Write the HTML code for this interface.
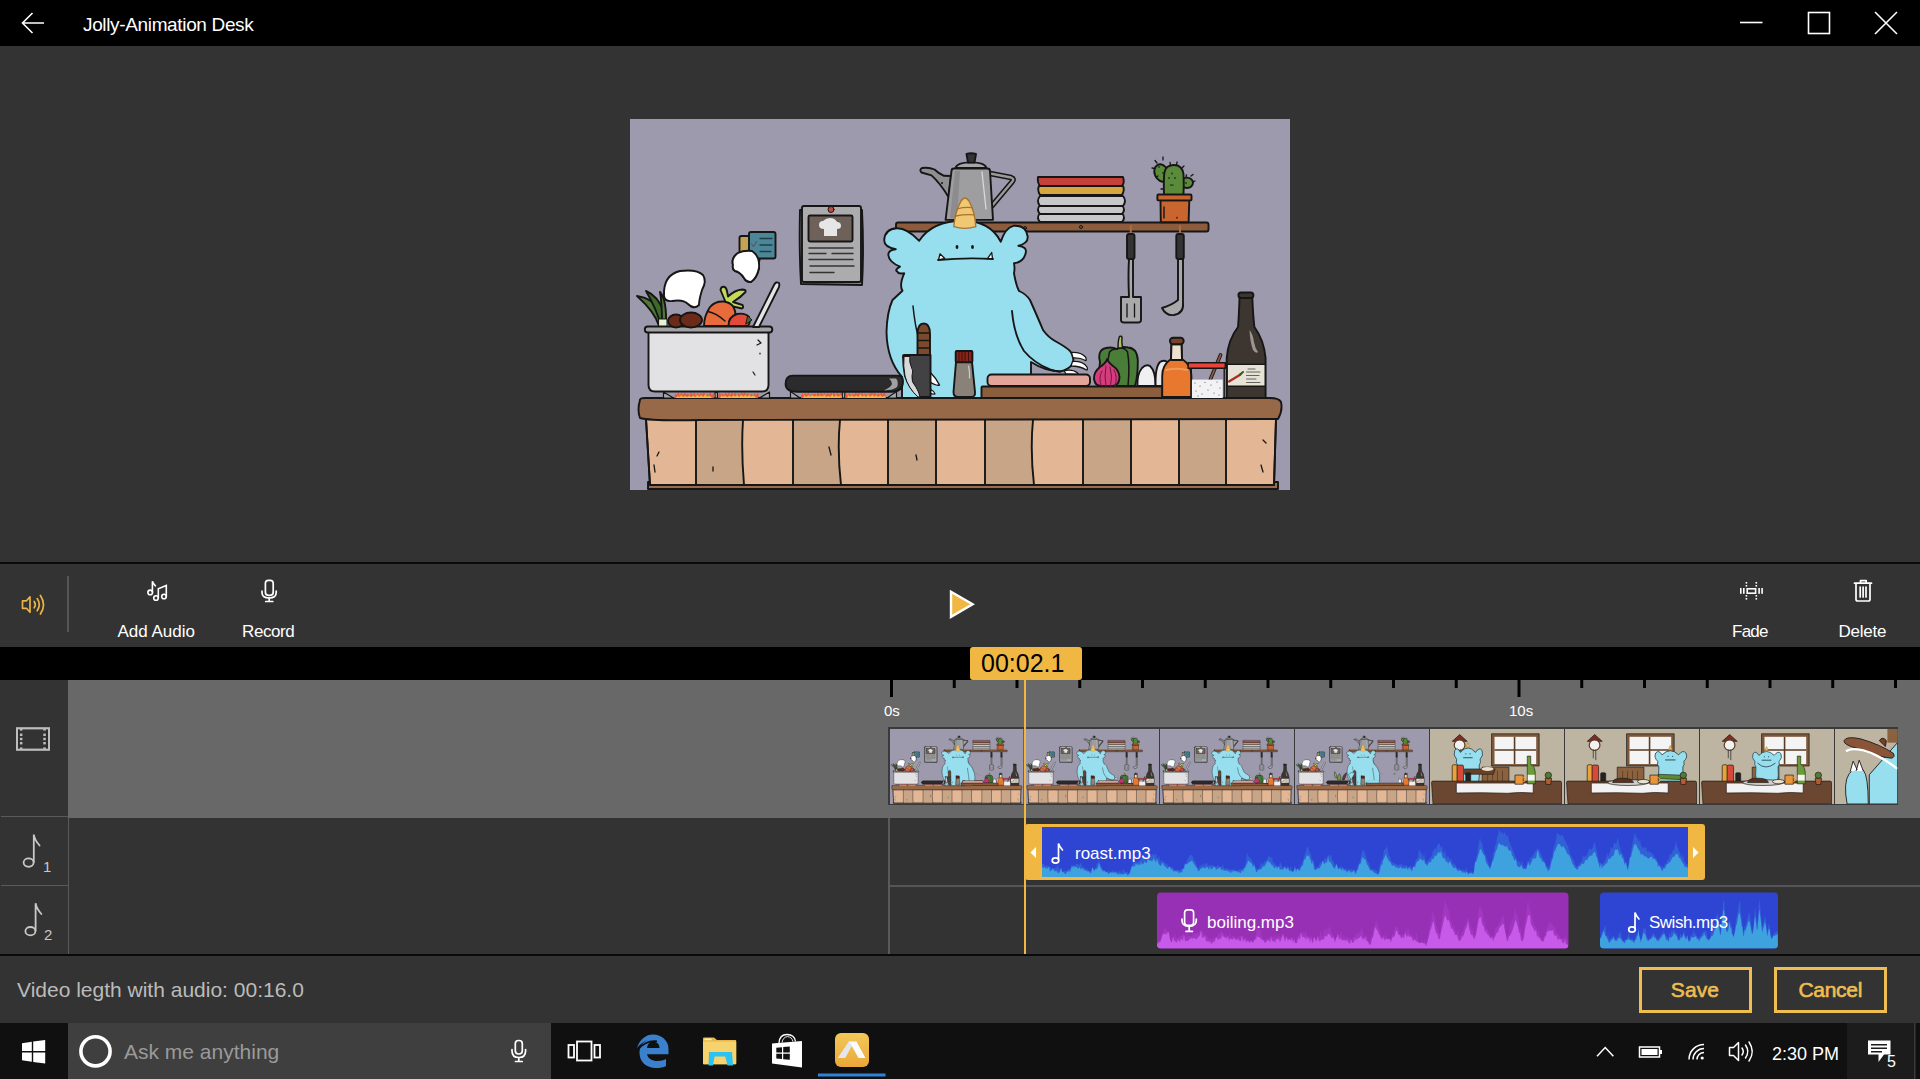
<!DOCTYPE html>
<html><head><meta charset="utf-8">
<style>
*{margin:0;padding:0;box-sizing:border-box}
html,body{width:1920px;height:1079px;overflow:hidden;background:#333;font-family:"Liberation Sans",sans-serif}
.a{position:absolute}
.t{position:absolute;white-space:nowrap;line-height:1}
svg{position:absolute;overflow:visible}
</style></head><body>
<svg width="0" height="0" style="position:absolute"><defs><symbol id="kitchen" viewBox="630 119 660 371" preserveAspectRatio="none">
 <rect x="630" y="119" width="660" height="371" fill="#9e9aad"/>
 <g stroke="#161616" stroke-width="1.9" stroke-linejoin="round" stroke-linecap="round">
 <!-- cabinet -->
 <rect x="648" y="482" width="630" height="7" fill="#9a6c4b"/>
 <path d="M646 419H1276L1274 485H650Z" fill="#e3b795"/>
 <g fill="#c9a587" stroke="none">
  <rect x="696" y="420" width="47" height="65"/><rect x="793" y="420" width="47" height="65"/><rect x="888" y="420" width="48" height="65"/><rect x="985" y="420" width="48" height="65"/><rect x="1083" y="420" width="48" height="65"/><rect x="1179" y="420" width="47" height="65"/>
 </g>
 <path d="M646 419H1276L1274 485H650Z" fill="none"/>
 <path fill="none" d="M696 420V485M743 420Q741 450 744 485M793 420V485M840 420Q837 450 841 485M888 420V485M936 420V485M985 420V485M1033 420Q1030 450 1034 485M1083 420V485M1131 420V485M1179 420V485M1226 420V485"/>
 <g fill="none" stroke-width="1.3">
  <path d="M654 465L655 472M657 456L659 452M713 467V471M829 447L831 455M1263 440L1266 443M1261 465L1263 472M916 455L917 460"/>
 </g>
 <!-- counter top -->
 <path d="M640 400Q637 410 640 418Q650 421 700 420L1278 419Q1283 410 1281 402Q1279 398 1270 398H645Q640 398 640 400Z" fill="#976949"/>
 <!-- pot stands & flames -->
 <path d="M663.5 392V398H673.5ZM769.5 392V398H759.5ZM715 392.5H717.5V398H715ZM790.5 391.5V398H800ZM896.5 391.5V398H887ZM842.3 391.5H844.8V398H842.3Z" fill="#a8a8aa" stroke-width="1.2"/>
 <path d="M674.0 398.0 L675.2 393.2 L676.6 394.7 L678.4 391.6 L679.8 395.6 L681.6 392.3 L683.0 395.3 L684.8 391.9 L686.2 394.8 L688.0 393.3 L689.4 396.0 L691.2 391.4 L692.6 395.4 L694.4 391.6 L695.8 396.0 L697.6 392.4 L699.0 394.9 L700.8 392.9 L702.2 394.6 L704.0 391.2 L705.4 396.0 L707.2 393.4 L708.6 395.2 L710.4 391.2 L711.8 395.4 L713.6 393.0 L715.0 395.4 L714.0 398.0Z" fill="#ec5a3a" stroke="none"/><path d="M676.0 398.0 L677.5 396.0 L679.0 397.0 L681.5 395.3 L683.0 396.9 L685.5 395.7 L687.0 397.0 L689.5 395.7 L691.0 396.9 L693.5 395.6 L695.0 397.2 L697.5 394.7 L699.0 396.8 L701.5 395.0 L703.0 397.1 L705.5 394.5 L707.0 396.6 L709.5 395.8 L711.0 397.0 L712.0 398.0Z" fill="#f6b640" stroke="none"/>
 <path d="M718.0 398.0 L719.2 391.1 L720.6 394.6 L722.4 393.4 L723.8 395.9 L725.6 391.4 L727.0 394.9 L728.8 391.8 L730.2 395.5 L732.0 392.0 L733.4 395.1 L735.2 392.0 L736.6 395.8 L738.4 392.4 L739.8 395.4 L741.6 391.7 L743.0 394.5 L744.8 391.1 L746.2 395.2 L748.0 392.4 L749.4 395.6 L751.2 393.4 L752.6 396.0 L754.4 392.3 L755.8 395.5 L757.6 392.5 L759.0 394.7 L758.0 398.0Z" fill="#ec5a3a" stroke="none"/><path d="M720.0 398.0 L721.5 395.2 L723.0 396.8 L725.5 395.6 L727.0 397.2 L729.5 395.5 L731.0 397.1 L733.5 395.2 L735.0 396.5 L737.5 395.0 L739.0 397.1 L741.5 394.7 L743.0 396.6 L745.5 394.9 L747.0 396.6 L749.5 394.9 L751.0 396.6 L753.5 395.5 L755.0 396.5 L756.0 398.0Z" fill="#f6b640" stroke="none"/>
 <path d="M801.0 398.0 L802.2 392.9 L803.6 395.2 L805.4 392.6 L806.8 395.1 L808.6 391.9 L810.0 395.9 L811.8 393.5 L813.2 394.7 L815.0 392.9 L816.4 395.6 L818.2 391.0 L819.6 395.3 L821.4 391.4 L822.8 395.3 L824.6 391.9 L826.0 395.8 L827.8 391.9 L829.2 394.7 L831.0 392.2 L832.4 394.9 L834.2 391.8 L835.6 395.9 L837.4 391.6 L838.8 395.1 L840.6 392.7 L842.0 396.0 L842.0 398.0Z" fill="#ec5a3a" stroke="none"/><path d="M803.0 398.0 L804.5 394.7 L806.0 396.9 L808.5 394.9 L810.0 396.6 L812.5 394.9 L814.0 396.6 L816.5 395.4 L818.0 396.6 L820.5 395.3 L822.0 396.5 L824.5 394.7 L826.0 397.1 L828.5 395.8 L830.0 397.0 L832.5 394.6 L834.0 396.9 L836.5 395.1 L838.0 397.0 L840.5 395.2 L842.0 396.9 L840.0 398.0Z" fill="#f6b640" stroke="none"/>
 <path d="M845.0 398.0 L846.2 392.9 L847.6 395.8 L849.4 392.5 L850.8 395.8 L852.6 393.3 L854.0 395.4 L855.8 391.2 L857.2 394.8 L859.0 391.6 L860.4 395.7 L862.2 392.2 L863.6 395.6 L865.4 393.1 L866.8 395.8 L868.6 393.0 L870.0 394.6 L871.8 391.4 L873.2 394.8 L875.0 391.5 L876.4 395.7 L878.2 392.7 L879.6 395.1 L881.4 391.7 L882.8 394.7 L884.6 391.3 L886.0 395.9 L886.0 398.0Z" fill="#ec5a3a" stroke="none"/><path d="M847.0 398.0 L848.5 395.1 L850.0 396.7 L852.5 395.2 L854.0 397.1 L856.5 395.3 L858.0 397.1 L860.5 394.6 L862.0 396.6 L864.5 395.2 L866.0 397.0 L868.5 394.6 L870.0 396.8 L872.5 394.7 L874.0 396.6 L876.5 395.2 L878.0 396.9 L880.5 395.1 L882.0 396.9 L884.5 395.8 L886.0 397.0 L884.0 398.0Z" fill="#f6b640" stroke="none"/>
 <!-- pot -->
 <path d="M648.5 332V385Q648.5 391.5 655 391.5H762Q768.5 391.5 768.5 385V332Z" fill="#e2e2e4"/>
 <rect x="644.8" y="326.5" width="127.5" height="6" rx="3" fill="#a3a3a5"/>
 <path d="M758 340L761 343L757 345M760 353V354M753 372L755 375" fill="none" stroke-width="1.2"/>
 <!-- greens / veg -->
 <path d="M637 296Q652 298 660 310L664 326L659 326Q655 312 637 296Z" fill="#4f7a36"/>
 <path d="M646 291Q658 296 664 312L666 326H661Q657 310 646 291Z" fill="#3d6a2b"/>
 <path d="M660 292Q667 300 666 326H662Q662 302 660 292Z" fill="#4f7a36"/>
 <path d="M659 319H667V326H659Z" fill="#e8f0d8" stroke-width="1"/>
 <ellipse cx="676" cy="321" rx="8" ry="6.5" fill="#6b2b18"/>
 <ellipse cx="691" cy="320" rx="11" ry="7.5" fill="#6b2b18"/>
 <path d="M720.5 290Q721 286.5 724 286.8Q726 287 727 291L728 296.5Q735 290 742 289.5Q746.5 289.5 745.5 292Q741 297 733 302Q739 304 742.5 305Q744 307.5 742 308.5L731 306L726 303L723 296Z" fill="#c3d957"/>
 <path d="M704 326Q704 316 710 307Q715 301 724 301.5Q734 303 735.3 312Q735.5 320 734 326Z" fill="#e86b3b"/>
 <path d="M708 311.5Q716 313 725 321" fill="none" stroke-width="1.4"/>
 <path d="M728.5 326Q728 317 737 314Q745 312.5 749 317Q751 322 748 326Z" fill="#e34a3c"/>
 <path d="M748 316L752 320L746 324Z" fill="#3e6a2b" stroke-width="1"/>
 <path d="M753 327L774 285Q776 281 779 283Q780 286 778 289L759 327Z" fill="#e4e4e6"/>
 <!-- steam blobs -->
 <path d="M664 296Q663 275 680 271Q697 269 703 275Q707 281 702 290Q699 300 699 305Q694 310 688 304Q683 299 672 301Q665 302 664 296Z" fill="#fff"/>
 <path d="M733 265Q731 258 738 253Q744 250 752 251Q760 256 759 268Q757 278 751 282Q746 282 744 278Q740 272 735 271Q732 269 733 265Z" fill="#fff"/>
 <!-- notes -->
 <rect x="739.5" y="236" width="20" height="26" rx="2" fill="#c4a256"/>
 <rect x="749" y="232" width="26.5" height="26.5" rx="2" fill="#4c8797"/>
 <path d="M760 238.5H772M760 245H772M760 251.5H771" fill="none" stroke="#1f3f48" stroke-width="1.3"/><path d="M751.5 244L753.5 246.5L756.5 241.5" fill="none" stroke="#6a4a6a" stroke-width="1.1"/>
 <path d="M733 265Q731 258 738 253Q744 250 752 251Q760 256 759 268Q757 278 751 282Q746 282 744 278Q740 272 735 271Q732 269 733 265Z" fill="#fff"/>
 <!-- recipe card -->
 <path d="M800 210Q799 250 801 284L862 285Q864 250 862 210Q830 207 800 210Z" fill="#8a8a8c"/>
 <rect x="802" y="206" width="59" height="76" rx="2" fill="#acacae"/>
 <rect x="808.5" y="215.5" width="44" height="26" rx="1.5" fill="#6e6159"/>
 <path d="M824 236V229Q819 229 819 225Q819 221 823 221Q826 218 830 218Q835 218 837 222Q841 222 841 226Q841 229 837 229V236Z" fill="#e6e6e6" stroke="none"/>
 <circle cx="831" cy="209.5" r="3" fill="#c54a3c" stroke-width="1"/>
 <path d="M809 248H853M809 253.5H826M832 253.5H853M809 259.5H853M810 266H854M810 272.5H834" fill="none" stroke="#333" stroke-width="1.4"/>
 <!-- shelf -->
 <rect x="896" y="222.5" width="312.5" height="9" rx="2" fill="#8c5c3c"/>
 <circle cx="1025" cy="228" r="1.5" fill="none" stroke-width="1"/><circle cx="1081" cy="227" r="1.5" fill="none" stroke-width="1"/>
 <!-- plates -->
 <path d="M1040 213Q1036 218 1040 222H1122Q1126 218 1122 213Z" fill="#c8c8ca"/>
 <path d="M1040 205Q1036 210 1040 214H1122Q1126 210 1122 205Z" fill="#c8c8ca"/>
 <path d="M1040 196Q1036 201 1040 206H1123Q1127 201 1123 196Z" fill="#c8c8ca"/>
 <path d="M1039 186Q1037 190 1040 195H1122Q1125 190 1123 186Z" fill="#d7a640"/>
 <path d="M1038 177Q1037 182 1040 186H1122Q1125 182 1123 177Z" fill="#c8403a"/>
 <!-- cactus -->
 <ellipse cx="1161.5" cy="173" rx="6.8" ry="9" transform="rotate(-25 1161.5 173)" fill="#5a8a3a"/>
 <ellipse cx="1187" cy="182.8" rx="6" ry="5.2" fill="#5a8a3a"/>
 <path d="M1164 195Q1163.5 178 1164.5 172Q1166 165 1174 165Q1182 165 1183.5 174Q1184 185 1183.5 195Z" fill="#5a8a3a"/>
 <g stroke-width="1.3"><path d="M1155 160.5L1157 163M1163 157L1163 160M1170 162.5L1170.5 165.5M1177 162L1176.5 165M1182 168L1184 166M1191 176L1193 174.5M1195 181L1193 182M1152 168L1155 168.5M1156 177L1158 176M1161 189L1163 189M1186 177L1186.5 175"/></g>
 <g fill="#1d3a12" stroke="none"><circle cx="1159" cy="167" r="0.9"/><circle cx="1163" cy="173" r="0.9"/><circle cx="1172" cy="173.5" r="0.9"/><circle cx="1175" cy="178" r="0.9"/><circle cx="1169" cy="178" r="0.9"/><rect x="1170" y="184.5" width="3.5" height="1.2"/><circle cx="1186" cy="183" r="0.9"/></g>
 <path d="M1160.5 200.4H1189.3L1188.6 222.3H1160.8Z" fill="#c9652f"/>
 <rect x="1157.4" y="194.5" width="34.1" height="5.9" rx="1" fill="#c9652f"/>
 <path d="M1164 207V218M1177 217.5V218" fill="none" stroke-width="1.4"/>
 <!-- utensils -->
 <path d="M1130.8 226V234M1180 226V234" fill="none" stroke="#b26a45" stroke-width="2"/>
 <rect x="1127" y="234" width="7.5" height="25" rx="2" fill="#333"/>
 <rect x="1176.3" y="234" width="7.5" height="25" rx="2" fill="#333"/>
 <path d="M1129 259Q1128 275 1129 297H1121V320Q1121 322.5 1124 322.5H1138Q1141 322.5 1141 320V297H1133Q1133 275 1133 259Z" fill="#a9a9ab"/>
 <path d="M1127 304V317M1134.5 304V317" fill="none" stroke-width="1.3"/>
 <path d="M1178 259V300Q1172 305 1162 308Q1166 316 1174 315Q1184 313 1183 303V259Z" fill="#a9a9ab"/>
 <!-- kettle -->
 <path d="M990 173.5L1011 177.5Q1015 179 1012 182L992 205.8" fill="none" stroke="#161616" stroke-width="5.5"/>
 <path d="M990 173.5L1011 177.5Q1015 179 1012 182L992 205.8" fill="none" stroke="#9a9a9c" stroke-width="2.4"/>
 <path d="M951 176L944 175.8Q938 173 934.5 169.5Q929 167 922 168Q919 170 921.5 172.5L931.5 175.4Q940 183 948.5 197Z" fill="#8f8f91"/>
 <circle cx="942" cy="183" r="1" fill="#161616" stroke="none"/>
 <path d="M951.5 171Q951.5 168.5 954 168.5H987.5Q990 168.5 990 171L993 219.9H945.6Z" fill="#9e9ea0"/>
 <path d="M955 171L950 218H957L960 171Z" fill="#8c8c8e" stroke="none"/>
 <path d="M982 172L986 209" fill="none" stroke="#d8d8d8" stroke-width="1.3"/>
 <path d="M955.6 168Q957 162.4 971 162.4Q985 162.4 986.4 168Z" fill="#a6a6a8"/>
 <path d="M966.5 154Q971 152.5 976 154L974.5 162.6H968Z" fill="#343434"/>
 <!-- monster body -->
 <path d="M902 398V377Q887 360 886.5 332Q887 312 892.5 300L902.5 290.8Q899 285 904.2 273.3Q898 274 897.5 271.7Q894 270 900 266.7Q889 262 888.3 255Q888 250 895.8 249.2Q884 247 884.2 240Q885 229 896.7 228.3Q907 228 919.2 240.8Q932 221 963.3 220.8Q990 221 1000.8 241.7Q1005 228 1013.3 225.8Q1026 225 1027.5 235.8Q1029 243 1018.3 245.8Q1027 247 1025.8 252.5Q1024 262 1014 263.3Q1015 268 1014 273.3Q1016 285 1019 291Q1026 294 1030 300Q1038 318 1043 330Q1048 337 1055 341Q1066 347 1070 351Q1075 357 1072.5 364Q1069 369.5 1060 371.5Q1045 371 1031 362L1031 375L1029 398Z" fill="#97dfee"/>
 <path d="M1012 311Q1014 335 1024 351Q1034 363 1050 369.5Q1056 371.5 1060 371.5" fill="none" stroke-width="1.9"/>
 <path d="M913 306Q915 325 918 336" fill="none" stroke-width="1.5"/>
 <path d="M1071.5 352.5Q1081 352 1085.5 357Q1087 360.5 1085.5 360.5Q1080 357.5 1073 358Z" fill="#fff" stroke-width="1.3"/>
 <path d="M1072.5 361.5Q1083 361 1087 367Q1088 370.5 1086.5 370Q1080 366 1071 366Z" fill="#fff" stroke-width="1.3"/>
 <path d="M1064 370.5Q1073 369 1077 372.5Q1079 374.5 1077.5 374.5L1066 374Z" fill="#fff" stroke-width="1.3"/>
 <!-- face -->
 <ellipse cx="957" cy="247" rx="1.4" ry="2.1" fill="#111" stroke="none"/>
 <ellipse cx="972.5" cy="247" rx="1.4" ry="2.1" fill="#111" stroke="none"/>
 <path d="M938 260Q965 257.5 993 259" fill="none" stroke-width="1.8"/>
 <path d="M938.5 260L940 253.8L944.6 258.3ZM992.5 258.6L991.7 252.5L987.5 258.6Z" fill="#fff" stroke-width="1.3"/>
 <path d="M953.8 226.7Q955 212 961 201Q965 195 969 201Q975 212 975.8 226.7Q965 230 953.8 226.7Z" fill="#f0c873" stroke="#a8732c" stroke-width="1.4"/>
 <path d="M957.2 208.8Q964 207 971.8 207.6M955.5 216Q965 214 974.2 214.8" fill="none" stroke="#a8732c" stroke-width="1.3"/>
 <!-- pan -->
 <path d="M785.6 384Q785.6 375.6 793 375.6H897Q903 375.6 903 381Q903 391.8 892 391.8H797Q785.6 391.8 785.6 384Z" fill="#2b2b2d"/>
 <path d="M889 378.5H896Q899 382 897 387Q894 390 884 390.5Q891 387 892 384Q892 381 889 378.5Z" fill="#a0a0a2" stroke="none"/>
 <!-- cleaver -->
 <path d="M930 372Q936 378 939.5 385Q936 386 930 382Z" fill="#fff" stroke-width="1.4"/>
 <path d="M930 389Q934 391 935 394Q932 394.5 930 393Z" fill="#fff" stroke-width="1.2"/>
 <path d="M917.5 355V334Q917.5 323.5 923.7 323.5Q930 323.5 930 334V355Z" fill="#7b4a2c"/>
 <path d="M918 333H929.5M918 340.5H929.5M918 348H929.5" fill="none" stroke-width="1.3"/>
 <path d="M903 356Q903 355 904 355H930.5V397H919Q909 388 905 376Q903 366 903 356Z" fill="#424244"/>
 <path d="M904 356.5H910Q909 362 911 366Q914 371 912 376Q911 382 916 387Q919 392 920 397H918Q908 388 905 376Q903 366 904 356.5Z" fill="#d8d8da" stroke-width="1"/>
 <!-- grinder -->
 <path d="M956 362L953.5 392Q953.5 397 958 397H971Q975.5 397 975 392L972 362Z" fill="#8a8279"/>
 <path d="M968.5 366Q970 372 969.5 378" fill="none" stroke="#d0ccc6" stroke-width="1.2"/>
 <rect x="955.7" y="351" width="16.7" height="11.3" rx="1" fill="#8a2418"/>
 <path d="M959 352V361M962 352V361M965 352V361M968.5 352V361" fill="none" stroke="#3a0e08" stroke-width="0.9"/>
 <!-- cutting board & meat -->
 <rect x="981.5" y="386.5" width="181" height="11.5" rx="1" fill="#8b5e3e"/>
 <rect x="987.5" y="374.5" width="102.5" height="11.5" rx="4" fill="#e3a59a"/>
 <!-- pepper, onion, eggs -->
 <path d="M1100 362Q1097 350 1106 348Q1112 346.5 1117 349Q1122 346 1128 347.5Q1137 348 1137.8 360Q1138 376 1135 386H1101Q1098 376 1100 362Z" fill="#4a7d38"/>
 <path d="M1109 386Q1106 365 1109.5 352Q1112 348.5 1117 349M1128 386Q1130 365 1127.5 352Q1125 348 1121 348" fill="none" stroke-width="1.5"/>
 <path d="M1118 348Q1118 340 1119.5 336.5Q1121.5 335.5 1122 337.5Q1121.5 342 1122.5 348Z" fill="#a8c060" stroke-width="1.4"/>
 <path d="M1107 359.2Q1106 363 1100 367Q1093.5 372 1094 379Q1095 386 1101 386H1113Q1119.5 385 1119.5 377Q1119 370 1113 366Q1108 362 1107 359.2Z" fill="#d63c7d"/>
 <path d="M1102 371Q1098 378 1101.5 386M1106 366Q1104 376 1106 386M1110 367Q1113 376 1110.5 386M1114 370Q1118 377 1115 386" fill="none" stroke="#6b1a3c" stroke-width="1"/>
 <path d="M1137.4 386Q1137 374 1142 368Q1146 364 1150 366Q1155.6 371 1155.6 386Z" fill="#f0f0f2"/>
 <path d="M1155.6 386Q1155 367 1160 362Q1165 359 1168.8 363V386Z" fill="#e9e9ec"/>
 <!-- orange bottle -->
 <path d="M1171.5 344.2H1181.5L1182 359Q1191.4 365 1191.4 376V397H1162.2V376Q1162.2 365 1171 359Z" fill="#e9782f"/>
 <path d="M1171.5 344.2H1181.5L1182 360H1171Z" fill="#ede2d0"/>
 <path d="M1166 370Q1176 367.5 1187 370" fill="none" stroke="#f4a060" stroke-width="2" stroke-opacity="0.8"/>
 <rect x="1169.9" y="337.7" width="13.8" height="6.5" rx="3.2" fill="#7a4225"/>
 <!-- jar -->
 <path d="M1220.6 354.8L1210.3 379.6" fill="none" stroke="#161616" stroke-width="3.6"/>
 <path d="M1220.6 354.8L1210.3 379.6" fill="none" stroke="#8b5a3c" stroke-width="1.8"/>
 <rect x="1191.2" y="379.6" width="31.5" height="18.4" fill="#f2f2f4" stroke="none"/>
 <g fill="#555" stroke="none"><circle cx="1195" cy="383" r="0.6"/><circle cx="1200" cy="386" r="0.6"/><circle cx="1205" cy="382.5" r="0.6"/><circle cx="1211" cy="385" r="0.6"/><circle cx="1217" cy="382" r="0.6"/><circle cx="1220" cy="388" r="0.6"/><circle cx="1196" cy="391" r="0.6"/><circle cx="1202" cy="394" r="0.6"/><circle cx="1208" cy="390" r="0.6"/><circle cx="1214" cy="393" r="0.6"/><circle cx="1219" cy="395" r="0.6"/><circle cx="1198" cy="396" r="0.6"/></g>
 <path d="M1191.2 368.3V398M1224.2 368.3V398" fill="none" stroke-width="1.4"/>
 <rect x="1188.1" y="362.8" width="37.2" height="5.5" fill="#e8453a" stroke-width="1.5"/>
 <!-- wine -->
 <path d="M1239.5 297.5Q1239 315 1238 327Q1228 340 1226.7 358V398H1265.6V358Q1264 340 1254.4 327Q1253 315 1252.3 297.5Z" fill="#3d3530"/>
 <rect x="1238.4" y="292.5" width="15" height="5.5" rx="2.7" fill="#3d3530"/>
 <path d="M1249.5 330Q1253 334 1254 342Q1255 348 1258 352Q1256 354 1253 350Q1250 342 1249.5 330Z" fill="#9a9490" stroke="none"/>
 <rect x="1227.2" y="364.4" width="38" height="21.8" fill="#e6e2d6" stroke-width="1.4"/>
 <path d="M1229 381.5L1240.5 374.5" fill="none" stroke="#b02a24" stroke-width="2.2"/>
 <path d="M1240 374.5L1243 372" fill="none" stroke="#2e5a22" stroke-width="2"/>
 <path d="M1248 369H1255M1246.5 372H1260M1246.5 375.5H1259M1246.5 379H1256M1246.5 382.5H1260" fill="none" stroke="#555" stroke-width="0.9"/>
 </g>
</symbol>
<symbol id="kitchen1" viewBox="630 119 660 371" preserveAspectRatio="none">
 <use href="#kitchen" x="630" y="119" width="660" height="371"/>
 <path d="M1019 291L1031 300L1043 330L1072 350L1092 360L1092 373.5L1031 373.5L1031 362Z" fill="#9e9aad"/>
 <rect x="987.5" y="374.5" width="102.5" height="11.5" rx="4" fill="#e3a59a" stroke="#161616" stroke-width="1.9"/>
 <path d="M1014 273.3Q1016 285 1019 291Q1040 310 1047 340Q1052 362 1046 380Q1042 392 1036 398H1000V273Z" fill="#97dfee" stroke="none"/>
 <path d="M1014 273.3Q1016 285 1019 291Q1040 310 1047 340Q1052 362 1046 380Q1042 392 1036 398" fill="none" stroke="#161616" stroke-width="1.9"/>
 <path d="M1012 311Q1018 350 1022 386" fill="none" stroke="#161616" stroke-width="1.9"/>
 <rect x="981.5" y="386.5" width="181" height="11.5" rx="1" fill="#8b5e3e" stroke="#161616" stroke-width="1.9"/>
 <rect x="987.5" y="374.5" width="102.5" height="11.5" rx="4" fill="#e3a59a" stroke="#161616" stroke-width="1.9"/>
</symbol>
<symbol id="kitchen4" viewBox="630 119 660 371" preserveAspectRatio="none">
 <use href="#kitchen1" x="630" y="119" width="660" height="371"/>
 <g stroke="#161616" stroke-width="1.9" stroke-linejoin="round">
  <path d="M1046 344H1140V386H1046Z" fill="#9e9aad" stroke="none"/>
  <path d="M985 372H1046V386H985Z" fill="#97dfee" stroke="none"/>
  <path d="M1046 344Q1049 362 1046 380Q1044 384 1042 386" fill="none"/>
  <rect x="981.5" y="386.5" width="181" height="11.5" rx="1" fill="#8b5e3e"/>
  <path d="M893 345Q905 328 925 336L906 372Z" fill="#97dfee"/>
  <path d="M840 372Q835 350 850 340Q858 355 856 372Z" fill="#6f9a45"/>
  <path d="M862 370Q868 340 885 335Q880 358 872 372Z" fill="#5a3a3a"/>
  <path d="M828 360Q820 345 826 330Q838 345 836 362Z" fill="#8aaa50"/>
 </g>
</symbol>
<g id="room">
 <rect width="135" height="77" fill="#bdb4a2"/>
 <g stroke="#1f1a16" stroke-width="0.7" stroke-linejoin="round">
 <rect x="62" y="4.9" width="48" height="33.1" fill="#7b573b"/>
 <rect x="65" y="8" width="42" height="28" fill="#f4f4f4" stroke="none"/>
 <path d="M85.2 8V36M65 21.6H107" stroke="#5a3b25" stroke-width="1.6"/>
 <path d="M22.4 12.7L29.9 5.7L37.5 12.7Z" fill="#7b2e22"/>
 <circle cx="29.8" cy="16.6" r="5.4" fill="#f2f2f2" stroke="#5a3b25" stroke-width="1.2"/>
 <path d="M28.5 21V30M31 21V32" stroke="#333" stroke-width="0.8"/>
 <path d="M52.6 54V39.2H79.5V54Z" fill="#8a623f"/>
 <path d="M58 43V54M63 43V54M68 43V54M73 43V54" stroke="#5a3b25" stroke-width="0.8"/>
 </g>
</g>
<g id="table">
 <g stroke="#1f1a16" stroke-width="0.7" stroke-linejoin="round">
 <rect x="22.4" y="36.7" width="5.2" height="20" rx="1.5" fill="#e9a33a"/>
 <rect x="27.3" y="37" width="6.5" height="20" rx="1.5" fill="#d84a38"/>
 <rect x="36" y="45" width="5" height="12" rx="1" fill="#222"/>
 <path d="M1.6 55Q1.6 53.5 3 53.5H131Q132.5 53.5 132.5 55V77H3Z" fill="#6b4631"/>
 <path d="M26.5 55.5H104V65.7Q90 64.5 78 66Q55 65 26.5 65.7Z" fill="#f3f1f2"/>
 <path d="M85.6 47.3H94V56.7H85.6Z" fill="#e9963a"/>
 <path d="M94 49.5Q97.5 52 94 54.5" fill="none" stroke="#e9963a" stroke-width="1.2"/>
 <path d="M116 50.5H122.5L121.5 57H117Z" fill="#b85c30"/>
 <circle cx="119.2" cy="47.5" r="3.2" fill="#4e7d36"/>
 </g>
</g>
<g id="plate" stroke="#1f1a16" stroke-width="0.7"> <ellipse cx="63.5" cy="55" rx="20.5" ry="3" fill="#cfcfcf"/>
 <path d="M48 55Q48 50.5 58 50.5Q68 50.5 69 55Z" fill="#5c2f1c"/>
 <ellipse cx="79" cy="54" rx="6" ry="2.2" fill="#e8e2d0"/>
</g>
<g id="mini">
 <path d="M8 9Q16 0 24 9Q28 3 31 7Q33 12 29 16Q30 20 28 22Q29 32 27 42H6Q4 32 5 22Q3 20 4 16Q0 12 2 7Q5 3 8 9Z" fill="#97dfee" stroke="#1f3a44" stroke-width="0.8"/>
 <path d="M14 3.5L16 -1L18 3.5Z" fill="#f0c060" stroke="#a8732c" stroke-width="0.5"/>
 <path d="M11 14.5H21" stroke="#1f3a44" stroke-width="0.9"/>
 <circle cx="13.8" cy="10.5" r="0.6" fill="#1f3a44"/><circle cx="18.2" cy="10.5" r="0.6" fill="#1f3a44"/>
</g>
<symbol id="dining5" viewBox="0 0 135 77" preserveAspectRatio="none">
 <use href="#room"/>
 <use href="#mini" transform="translate(23 15) scale(0.95 1)"/>
 <path d="M34.7 41H65.6L64 46.5H34.7Z" fill="#6b3f26" stroke="#1f1a16" stroke-width="0.6"/>
 <ellipse cx="58" cy="41" rx="6" ry="2" fill="#e8e2d0"/>
 <use href="#table"/>
 <path d="M98 27.8H101.5V36Q106 39 106 44V56.3H98V44Q98 39 98 36Z" fill="#6a9a3a" stroke="#1f1a16" stroke-width="0.6"/>
 <rect x="98.5" y="47" width="7" height="6" fill="#f4f4f4"/>
</symbol>
<symbol id="dining6" viewBox="0 0 135 77" preserveAspectRatio="none">
 <use href="#room"/>
 <use href="#mini" transform="translate(89.3 18) scale(1.05 0.95)"/>
 <path d="M94 46.5L120 47.5L119 52L95 51Z" fill="#5d8a30" stroke="#1f1a16" stroke-width="0.6"/>
 <use href="#table"/>
 <use href="#plate"/>
</symbol>
<symbol id="dining7" viewBox="0 0 135 77" preserveAspectRatio="none">
 <use href="#room"/>
 <use href="#mini" transform="translate(51.5 19) scale(0.97 0.9)"/>
 <path d="M58 35Q66 43 76 35" fill="none" stroke="#1f3a44" stroke-width="0.8"/>
 <use href="#table"/>
 <use href="#plate"/>
 <path d="M98 27.8H101.5V36Q106 39 106 44V56.3H98V44Q98 39 98 36Z" fill="#6a9a3a" stroke="#1f1a16" stroke-width="0.6"/>
 <rect x="98.5" y="47" width="7" height="6" fill="#f4f4f4"/>
</symbol>
<symbol id="closeup" viewBox="0 0 62 77" preserveAspectRatio="none">
 <rect width="62" height="77" fill="#bdb4a2"/>
 <rect x="52" y="0" width="10" height="14" fill="#8a623f"/>
 <g stroke="#1a1a1a" stroke-width="0.9" stroke-linejoin="round">
 <path d="M34 47L62 14V77H34Z" fill="#97dfee"/>
 <path d="M12 77Q8 55 14 46Q20 38 28 42Q33 48 33 77Z" fill="#97dfee"/>
 <path d="M15 44L18 33L22 42M21 43L24 32L28 43" fill="#fff"/>
 <path d="M9 12Q11 7 25 10Q45 16 58 25Q60 29 56 30Q40 28 22 20Q8 16 9 12Z" fill="#8a5438"/>
 <path d="M44 12Q47 7 51 12L50 18Z" fill="#7a3e22"/>
 </g>
 <path d="M11 23Q15 19 28 22Q45 27 62 41" fill="none" stroke="#fff" stroke-width="2.4"/>
</symbol>
</defs></svg>
<!-- title bar -->
<div class="a" style="left:0;top:0;width:1920px;height:46px;background:#000"></div>
<svg style="left:0;top:0" width="1920" height="46">
 <g stroke="#fff" stroke-width="1.6" fill="none">
  <path d="M22.5 23H44M32.5 13L22.5 23L32.5 33"/>
  <path d="M1740 22.5H1762.5"/>
  <rect x="1808.5" y="12.5" width="21" height="21"/>
  <path d="M1875 12L1897 34M1897 12L1875 34"/>
 </g>
</svg>
<div class="t" style="left:83px;top:15px;font-size:19px;letter-spacing:-0.35px;color:#fff">Jolly-Animation Desk</div>

<!-- preview area -->
<div class="a" style="left:0;top:46px;width:1920px;height:516px;background:#333"></div>
<svg style="left:630px;top:119px" width="660" height="371"><use href="#kitchen" width="660" height="371"/></svg>

<!-- separator -->
<div class="a" style="left:0;top:562px;width:1920px;height:2px;background:#0a0a0a"></div>
<!-- toolbar -->
<div class="a" style="left:0;top:564px;width:1920px;height:83px;background:#333"></div>
<div class="a" style="left:67px;top:576px;width:2px;height:56px;background:#555"></div>


<!-- toolbar icons -->
<svg style="left:0;top:560px" width="1920" height="90" viewBox="0 560 1920 90">
 <g fill="none" stroke="#e9b443" stroke-width="1.7" stroke-linejoin="round" stroke-linecap="round">
  <path d="M22.5 600.8H26.5L30 596.8V612.2L26.5 608.3H22.5Z"/>
  <path d="M34.2 601.5Q36.3 604.6 34.2 607.8"/>
  <path d="M37.2 598.6Q41.3 604.6 37.2 610.8"/>
  <path d="M40.4 595.4Q46.6 604.6 40.4 614"/>
 </g>
 <g fill="none" stroke="#fff" stroke-width="1.6" stroke-linecap="round">
  <path d="M152.4 592V581.3Q153.2 584 155.4 585.8"/>
  <circle cx="150.2" cy="592.4" r="2.3"/>
  <path d="M158.3 598V588.7L166.3 585.5V596.5"/>
  <circle cx="156" cy="598" r="2.3"/>
  <circle cx="164" cy="596.5" r="2.3"/>
 </g>
 <g fill="none" stroke="#fff" stroke-width="1.7" stroke-linecap="round">
  <rect x="265.4" y="580.3" width="7.8" height="15" rx="3"/>
  <path d="M262 591.2V592.5Q262 598 269.2 598Q276.2 598 276.2 592.5V591.2"/>
  <path d="M269.2 598V601.5M265.7 601.5H272.8"/>
 </g>
 <path d="M951 591.8L972.6 604.3L951 616.8Z" fill="#f0b843" stroke="#fff" stroke-width="2.4" stroke-linejoin="miter"/>
 <g fill="#fff">
  <rect x="1740" y="588" width="1.6" height="5.8"/>
  <rect x="1743" y="588" width="1.6" height="5.8"/>
  <rect x="1758.3" y="588" width="1.6" height="5.8"/>
  <rect x="1761.3" y="588" width="1.6" height="5.8"/>
  <rect x="1745.6" y="582" width="1.6" height="1.6"/><rect x="1745.6" y="585" width="1.6" height="1.6"/>
  <rect x="1745.6" y="595" width="1.6" height="1.6"/><rect x="1745.6" y="598" width="1.6" height="1.6"/>
  <rect x="1755.5" y="582" width="1.6" height="1.6"/><rect x="1755.5" y="585" width="1.6" height="1.6"/>
  <rect x="1755.5" y="595" width="1.6" height="1.6"/><rect x="1755.5" y="598" width="1.6" height="1.6"/>
 </g>
 <rect x="1747.2" y="588.8" width="8.4" height="4.4" fill="none" stroke="#fff" stroke-width="1.6"/>
 <g fill="none" stroke="#fff" stroke-width="1.7" stroke-linecap="round" stroke-linejoin="round">
  <path d="M1854.5 583.2H1871.5"/>
  <path d="M1860.5 583V580.6H1866.2V583"/>
  <path d="M1856 583.5V599.2Q1856 601 1857.8 601H1868.2Q1870 601 1870 599.2V583.5"/>
  <path d="M1860.2 587V597M1863.1 587V597M1866 587V597"/>
 </g>
</svg>
<div class="t" style="left:117.5px;top:623px;font-size:17px;color:#fff">Add Audio</div>
<div class="t" style="left:242px;top:623px;font-size:17px;letter-spacing:-0.4px;color:#fff">Record</div>
<div class="t" style="left:1732px;top:623px;font-size:17px;letter-spacing:-0.75px;color:#fff">Fade</div>
<div class="t" style="left:1838.5px;top:623px;font-size:17px;letter-spacing:-0.22px;color:#fff">Delete</div>

<!-- black ruler bar -->
<div class="a" style="left:0;top:647px;width:1920px;height:33px;background:#000"></div>

<!-- timeline -->
<div class="a" style="left:0;top:680px;width:68px;height:274px;background:#333"></div>
<div class="a" style="left:68px;top:680px;width:1852px;height:138px;background:#686868"></div>
<div class="a" style="left:68px;top:818px;width:1852px;height:136px;background:#333"></div>
<div class="a" style="left:0;top:954px;width:1920px;height:2px;background:#0a0a0a"></div>


<!-- thumbnails -->
<div class="a" style="left:888px;top:727px;width:1010px;height:78px;background:#3a3a3a"></div>
<svg style="left:889.75px;top:728.5px" width="133.75" height="75"><use href="#kitchen1" width="133.75" height="75"/></svg>
<svg style="left:1024.5px;top:728.5px" width="134.00" height="75"><use href="#kitchen" width="134.00" height="75"/></svg>
<svg style="left:1159.5px;top:728.5px" width="134.00" height="75"><use href="#kitchen" width="134.00" height="75"/></svg>
<svg style="left:1294.5px;top:728.5px" width="134.00" height="75"><use href="#kitchen4" width="134.00" height="75"/></svg>
<svg style="left:1429.5px;top:728.5px" width="134.00" height="75"><use href="#dining5" width="134.00" height="75"/></svg>
<svg style="left:1564.5px;top:728.5px" width="134.00" height="75"><use href="#dining6" width="134.00" height="75"/></svg>
<svg style="left:1699.5px;top:728.5px" width="134.00" height="75"><use href="#dining7" width="134.00" height="75"/></svg>
<svg style="left:1834.5px;top:728.5px" width="62.50" height="75"><use href="#closeup" width="62.50" height="75"/></svg>
<!-- timeline details -->
<div class="a" style="left:1px;top:816px;width:67px;height:1px;background:#5a5a5a"></div>
<div class="a" style="left:1px;top:885px;width:67px;height:1px;background:#5a5a5a"></div>
<div class="a" style="left:68px;top:818px;width:1px;height:136px;background:#5a5a5a"></div>
<div class="a" style="left:888px;top:818px;width:2px;height:136px;background:#5a5a5a"></div>
<div class="a" style="left:890px;top:885px;width:1030px;height:2px;background:#555"></div>
<svg style="left:0;top:680px" width="1920" height="30" viewBox="0 680 1920 30"><g fill="#000"><rect x="890.00" y="680" width="3" height="17"/><rect x="952.75" y="680" width="3" height="8"/><rect x="1015.50" y="680" width="3" height="8"/><rect x="1078.25" y="680" width="3" height="8"/><rect x="1141.00" y="680" width="3" height="8"/><rect x="1203.75" y="680" width="3" height="8"/><rect x="1266.50" y="680" width="3" height="8"/><rect x="1329.25" y="680" width="3" height="8"/><rect x="1392.00" y="680" width="3" height="8"/><rect x="1454.75" y="680" width="3" height="8"/><rect x="1517.50" y="680" width="3" height="17"/><rect x="1580.25" y="680" width="3" height="8"/><rect x="1643.00" y="680" width="3" height="8"/><rect x="1705.75" y="680" width="3" height="8"/><rect x="1768.50" y="680" width="3" height="8"/><rect x="1831.25" y="680" width="3" height="8"/><rect x="1894.00" y="680" width="3" height="8"/></g></svg>
<div class="t" style="left:884px;top:703px;font-size:15px;color:#fff">0s</div>
<div class="t" style="left:1509px;top:703px;font-size:15px;color:#fff">10s</div>
<!-- track header icons -->
<svg style="left:0;top:700px" width="68" height="260" viewBox="0 700 68 260">
 <rect x="17.1" y="728.3" width="31.8" height="21.4" fill="none" stroke="#bdbdbd" stroke-width="2.2"/>
 <g fill="none" stroke="#1e1e1e" stroke-width="1"><path d="M18.8 729.5V748.5M47.2 729.5V748.5"/></g>
 <g fill="#bdbdbd">
  <rect x="19.9" y="733.6" width="2.5" height="2.4"/><rect x="19.9" y="737.8" width="2.5" height="2.4"/><rect x="19.9" y="742" width="2.5" height="2.4"/>
  <rect x="43.3" y="733.6" width="2.5" height="2.4"/><rect x="43.3" y="737.8" width="2.5" height="2.4"/><rect x="43.3" y="742" width="2.5" height="2.4"/>
  <rect x="19.9" y="729" width="2.5" height="1.6"/><rect x="43.3" y="729" width="2.5" height="1.6"/>
  <rect x="19.9" y="747.4" width="2.5" height="1.6"/><rect x="43.3" y="747.4" width="2.5" height="1.6"/>
 </g>
 <g fill="none" stroke="#c8c8c8" stroke-width="1.8" stroke-linecap="round">
  <path d="M33.8 862V834.6Q34.6 840 39.6 845.5"/>
  <ellipse cx="28.6" cy="862.6" rx="5" ry="4.2"/>
  <path d="M35.6 930.5V903.2Q36.4 908.6 41.4 914"/>
  <ellipse cx="30.4" cy="931.2" rx="5" ry="4.2"/>
 </g>
</svg>
<div class="t" style="left:43px;top:859px;font-size:15px;color:#c8c8c8">1</div>
<div class="t" style="left:44px;top:927px;font-size:15px;color:#c8c8c8">2</div>


<!-- clips -->
<svg style="left:0;top:820px" width="1920" height="135" viewBox="0 820 1920 135">
 <defs>
  <clipPath id="cr"><rect x="1042" y="827" width="646" height="50"/></clipPath>
  <clipPath id="cb"><rect x="1157" y="892.5" width="411.5" height="56" rx="4"/></clipPath>
  <clipPath id="cs"><rect x="1600" y="892.5" width="178" height="56" rx="4"/></clipPath>
 </defs>
 <rect x="1025" y="824" width="680" height="56" rx="3" fill="#f0b843"/>
 <rect x="1042" y="827" width="646" height="50" fill="#2e45d4"/>
 <g clip-path="url(#cr)"><path d="M1042.0,877.0 1042.0,862.7 1043.0,864.0 1044.0,863.9 1045.0,866.1 1046.0,866.3 1047.0,865.0 1048.0,866.5 1049.0,866.7 1050.0,866.9 1051.0,868.0 1052.0,869.5 1053.0,870.2 1054.0,867.8 1055.0,868.6 1056.0,868.3 1057.0,866.6 1058.0,864.4 1059.0,869.8 1060.0,870.6 1061.0,866.5 1062.0,872.2 1063.0,871.4 1064.0,870.7 1065.0,870.7 1066.0,870.9 1067.0,871.7 1068.0,868.7 1069.0,869.4 1070.0,868.1 1071.0,868.1 1072.0,866.6 1073.0,866.3 1074.0,865.3 1075.0,865.7 1076.0,864.2 1077.0,864.1 1078.0,864.6 1079.0,865.1 1080.0,864.6 1081.0,862.0 1082.0,866.6 1083.0,868.0 1084.0,866.6 1085.0,868.5 1086.0,870.3 1087.0,867.6 1088.0,870.6 1089.0,870.6 1090.0,870.8 1091.0,871.6 1092.0,872.3 1093.0,868.6 1094.0,869.6 1095.0,868.6 1096.0,866.5 1097.0,863.7 1098.0,862.6 1099.0,859.7 1100.0,864.5 1101.0,865.8 1102.0,867.5 1103.0,869.9 1104.0,870.6 1105.0,871.3 1106.0,872.4 1107.0,871.1 1108.0,872.4 1109.0,870.2 1110.0,873.1 1111.0,873.1 1112.0,872.0 1113.0,869.8 1114.0,871.5 1115.0,872.7 1116.0,869.9 1117.0,872.9 1118.0,871.5 1119.0,871.9 1120.0,869.8 1121.0,873.2 1122.0,873.1 1123.0,869.8 1124.0,869.3 1125.0,872.3 1126.0,872.4 1127.0,871.4 1128.0,872.4 1129.0,872.9 1130.0,872.6 1131.0,866.6 1132.0,865.6 1133.0,862.0 1134.0,863.5 1135.0,861.1 1136.0,862.4 1137.0,861.7 1138.0,862.2 1139.0,860.9 1140.0,860.6 1141.0,859.4 1142.0,857.3 1143.0,858.7 1144.0,856.7 1145.0,857.1 1146.0,857.7 1147.0,858.1 1148.0,852.7 1149.0,857.2 1150.0,856.6 1151.0,855.7 1152.0,854.6 1153.0,854.1 1154.0,854.8 1155.0,855.0 1156.0,852.7 1157.0,859.0 1158.0,858.4 1159.0,854.9 1160.0,861.9 1161.0,861.1 1162.0,859.6 1163.0,863.2 1164.0,860.4 1165.0,864.6 1166.0,862.7 1167.0,864.6 1168.0,865.1 1169.0,866.4 1170.0,866.4 1171.0,866.9 1172.0,866.7 1173.0,868.2 1174.0,869.3 1175.0,869.6 1176.0,870.4 1177.0,869.2 1178.0,870.3 1179.0,871.2 1180.0,869.4 1181.0,869.8 1182.0,868.4 1183.0,868.2 1184.0,867.6 1185.0,864.6 1186.0,864.0 1187.0,859.9 1188.0,858.8 1189.0,856.8 1190.0,854.3 1191.0,855.3 1192.0,855.8 1193.0,856.7 1194.0,860.6 1195.0,860.8 1196.0,863.4 1197.0,866.6 1198.0,867.2 1199.0,868.7 1200.0,863.9 1201.0,866.7 1202.0,865.2 1203.0,863.2 1204.0,866.5 1205.0,863.8 1206.0,863.5 1207.0,862.8 1208.0,865.6 1209.0,865.2 1210.0,865.4 1211.0,865.5 1212.0,864.2 1213.0,865.5 1214.0,866.2 1215.0,868.2 1216.0,866.4 1217.0,866.8 1218.0,864.4 1219.0,866.2 1220.0,868.6 1221.0,866.2 1222.0,867.3 1223.0,864.1 1224.0,868.7 1225.0,868.4 1226.0,868.5 1227.0,868.5 1228.0,868.5 1229.0,869.9 1230.0,869.4 1231.0,869.5 1232.0,870.0 1233.0,869.3 1234.0,868.5 1235.0,871.1 1236.0,871.8 1237.0,869.4 1238.0,870.4 1239.0,870.0 1240.0,869.0 1241.0,869.9 1242.0,872.4 1243.0,870.8 1244.0,867.8 1245.0,865.3 1246.0,862.2 1247.0,852.5 1248.0,855.2 1249.0,857.0 1250.0,858.0 1251.0,858.4 1252.0,860.5 1253.0,864.4 1254.0,862.4 1255.0,866.5 1256.0,867.4 1257.0,869.3 1258.0,869.3 1259.0,867.3 1260.0,867.2 1261.0,862.3 1262.0,864.0 1263.0,864.4 1264.0,861.5 1265.0,861.5 1266.0,860.5 1267.0,859.7 1268.0,857.0 1269.0,855.7 1270.0,856.9 1271.0,858.4 1272.0,856.6 1273.0,862.9 1274.0,862.0 1275.0,864.5 1276.0,865.0 1277.0,865.8 1278.0,866.1 1279.0,866.5 1280.0,861.8 1281.0,863.4 1282.0,866.3 1283.0,867.1 1284.0,867.3 1285.0,868.8 1286.0,869.0 1287.0,867.9 1288.0,869.8 1289.0,869.4 1290.0,867.8 1291.0,865.8 1292.0,870.7 1293.0,871.6 1294.0,870.1 1295.0,865.2 1296.0,872.1 1297.0,871.1 1298.0,869.7 1299.0,868.6 1300.0,867.7 1301.0,864.6 1302.0,862.6 1303.0,860.9 1304.0,857.6 1305.0,853.6 1306.0,851.2 1307.0,846.6 1308.0,847.1 1309.0,850.6 1310.0,852.8 1311.0,855.0 1312.0,860.3 1313.0,859.8 1314.0,863.9 1315.0,867.1 1316.0,867.9 1317.0,867.1 1318.0,866.8 1319.0,865.1 1320.0,862.5 1321.0,862.8 1322.0,860.8 1323.0,861.2 1324.0,861.3 1325.0,856.6 1326.0,859.8 1327.0,858.1 1328.0,855.2 1329.0,855.1 1330.0,857.6 1331.0,853.8 1332.0,859.3 1333.0,861.2 1334.0,862.9 1335.0,866.7 1336.0,865.6 1337.0,866.0 1338.0,866.5 1339.0,868.2 1340.0,866.6 1341.0,866.9 1342.0,866.7 1343.0,867.1 1344.0,869.2 1345.0,868.4 1346.0,868.6 1347.0,870.5 1348.0,868.1 1349.0,870.3 1350.0,869.1 1351.0,869.6 1352.0,868.8 1353.0,872.0 1354.0,872.0 1355.0,870.8 1356.0,871.9 1357.0,867.8 1358.0,864.9 1359.0,863.5 1360.0,860.8 1361.0,856.0 1362.0,852.1 1363.0,849.8 1364.0,851.6 1365.0,853.5 1366.0,856.3 1367.0,859.4 1368.0,862.3 1369.0,862.8 1370.0,866.6 1371.0,868.5 1372.0,869.4 1373.0,869.4 1374.0,868.2 1375.0,870.9 1376.0,869.9 1377.0,870.9 1378.0,874.2 1379.0,866.6 1380.0,867.4 1381.0,860.5 1382.0,859.4 1383.0,856.2 1384.0,849.1 1385.0,850.0 1386.0,847.9 1387.0,846.3 1388.0,851.6 1389.0,855.9 1390.0,856.2 1391.0,861.3 1392.0,862.3 1393.0,863.0 1394.0,863.5 1395.0,863.2 1396.0,864.0 1397.0,864.9 1398.0,865.0 1399.0,864.5 1400.0,864.8 1401.0,864.0 1402.0,864.2 1403.0,866.7 1404.0,864.9 1405.0,865.7 1406.0,865.2 1407.0,866.0 1408.0,866.8 1409.0,868.4 1410.0,865.7 1411.0,866.2 1412.0,868.7 1413.0,868.6 1414.0,865.5 1415.0,863.3 1416.0,858.6 1417.0,859.6 1418.0,856.8 1419.0,848.8 1420.0,851.4 1421.0,853.1 1422.0,853.9 1423.0,858.2 1424.0,853.0 1425.0,859.0 1426.0,862.2 1427.0,862.6 1428.0,859.9 1429.0,860.6 1430.0,857.7 1431.0,857.0 1432.0,855.4 1433.0,850.2 1434.0,851.2 1435.0,847.5 1436.0,849.3 1437.0,846.1 1438.0,844.4 1439.0,843.2 1440.0,844.4 1441.0,847.9 1442.0,845.8 1443.0,852.5 1444.0,853.6 1445.0,848.9 1446.0,857.6 1447.0,857.7 1448.0,855.2 1449.0,858.3 1450.0,860.7 1451.0,857.6 1452.0,861.9 1453.0,864.3 1454.0,863.1 1455.0,864.8 1456.0,866.0 1457.0,868.3 1458.0,869.2 1459.0,868.1 1460.0,868.7 1461.0,869.8 1462.0,871.1 1463.0,869.5 1464.0,870.0 1465.0,871.9 1466.0,867.4 1467.0,870.4 1468.0,873.4 1469.0,872.1 1470.0,872.8 1471.0,872.4 1472.0,870.2 1473.0,874.3 1474.0,870.1 1475.0,863.1 1476.0,857.3 1477.0,855.0 1478.0,847.8 1479.0,842.8 1480.0,837.2 1481.0,842.4 1482.0,842.6 1483.0,848.2 1484.0,850.9 1485.0,853.9 1486.0,855.2 1487.0,859.6 1488.0,862.1 1489.0,864.5 1490.0,867.0 1491.0,866.3 1492.0,861.1 1493.0,853.1 1494.0,852.0 1495.0,844.7 1496.0,844.5 1497.0,838.2 1498.0,835.4 1499.0,829.8 1500.0,830.9 1501.0,833.2 1502.0,831.8 1503.0,834.1 1504.0,834.4 1505.0,830.3 1506.0,835.6 1507.0,836.5 1508.0,834.5 1509.0,841.5 1510.0,842.5 1511.0,845.9 1512.0,847.5 1513.0,851.1 1514.0,853.1 1515.0,855.7 1516.0,858.5 1517.0,861.5 1518.0,861.0 1519.0,862.6 1520.0,861.0 1521.0,865.6 1522.0,860.3 1523.0,864.9 1524.0,867.4 1525.0,868.8 1526.0,864.8 1527.0,865.7 1528.0,864.3 1529.0,862.1 1530.0,858.5 1531.0,857.0 1532.0,857.3 1533.0,855.0 1534.0,853.5 1535.0,851.0 1536.0,851.5 1537.0,848.0 1538.0,849.4 1539.0,849.3 1540.0,852.3 1541.0,853.9 1542.0,856.1 1543.0,858.6 1544.0,860.7 1545.0,861.2 1546.0,865.0 1547.0,866.2 1548.0,866.5 1549.0,867.3 1550.0,863.6 1551.0,859.2 1552.0,857.0 1553.0,850.7 1554.0,846.2 1555.0,844.2 1556.0,839.8 1557.0,833.8 1558.0,833.2 1559.0,834.3 1560.0,835.9 1561.0,835.2 1562.0,834.9 1563.0,836.1 1564.0,838.0 1565.0,840.7 1566.0,841.7 1567.0,845.1 1568.0,845.2 1569.0,849.9 1570.0,853.0 1571.0,855.7 1572.0,857.6 1573.0,859.1 1574.0,860.9 1575.0,864.1 1576.0,866.6 1577.0,867.0 1578.0,864.4 1579.0,865.6 1580.0,861.8 1581.0,863.5 1582.0,860.1 1583.0,854.4 1584.0,857.0 1585.0,856.7 1586.0,855.5 1587.0,855.0 1588.0,852.0 1589.0,848.6 1590.0,849.1 1591.0,849.7 1592.0,848.9 1593.0,846.3 1594.0,842.5 1595.0,842.9 1596.0,848.0 1597.0,852.6 1598.0,856.8 1599.0,863.2 1600.0,862.1 1601.0,863.5 1602.0,864.1 1603.0,863.8 1604.0,861.6 1605.0,861.4 1606.0,858.1 1607.0,851.9 1608.0,857.1 1609.0,854.2 1610.0,851.9 1611.0,846.3 1612.0,849.3 1613.0,847.5 1614.0,843.4 1615.0,842.2 1616.0,844.5 1617.0,840.7 1618.0,836.5 1619.0,845.1 1620.0,847.3 1621.0,850.9 1622.0,853.5 1623.0,854.6 1624.0,857.3 1625.0,861.6 1626.0,862.7 1627.0,866.9 1628.0,866.0 1629.0,861.7 1630.0,855.8 1631.0,851.2 1632.0,845.5 1633.0,840.9 1634.0,835.2 1635.0,833.0 1636.0,836.7 1637.0,837.5 1638.0,839.8 1639.0,842.8 1640.0,837.5 1641.0,846.3 1642.0,846.4 1643.0,849.1 1644.0,846.3 1645.0,849.1 1646.0,846.8 1647.0,851.2 1648.0,851.8 1649.0,850.7 1650.0,852.4 1651.0,852.7 1652.0,852.8 1653.0,855.1 1654.0,855.2 1655.0,858.6 1656.0,858.0 1657.0,860.0 1658.0,862.6 1659.0,863.4 1660.0,865.1 1661.0,869.3 1662.0,865.2 1663.0,867.9 1664.0,866.3 1665.0,863.7 1666.0,863.9 1667.0,860.4 1668.0,860.4 1669.0,857.1 1670.0,853.8 1671.0,855.0 1672.0,852.7 1673.0,850.3 1674.0,849.8 1675.0,845.9 1676.0,840.8 1677.0,846.8 1678.0,847.4 1679.0,851.6 1680.0,852.5 1681.0,856.0 1682.0,857.5 1683.0,854.1 1684.0,861.7 1685.0,861.4 1686.0,864.7 1687.0,864.2 1688.0,863.8 1688.0,877.0Z" fill="#3260d6"/><path d="M1042.0,877.0 1042.0,866.0 1043.0,868.2 1044.0,867.4 1045.0,867.0 1046.0,869.0 1047.0,867.9 1048.0,868.5 1049.0,865.9 1050.0,871.9 1051.0,870.8 1052.0,869.8 1053.0,867.7 1054.0,870.8 1055.0,871.2 1056.0,871.3 1057.0,871.3 1058.0,873.2 1059.0,872.8 1060.0,871.3 1061.0,867.5 1062.0,871.8 1063.0,872.0 1064.0,872.5 1065.0,873.9 1066.0,874.2 1067.0,870.8 1068.0,872.7 1069.0,870.0 1070.0,872.4 1071.0,869.3 1072.0,864.8 1073.0,868.6 1074.0,865.4 1075.0,867.6 1076.0,867.1 1077.0,867.0 1078.0,869.2 1079.0,867.4 1080.0,867.5 1081.0,869.9 1082.0,867.9 1083.0,868.6 1084.0,870.8 1085.0,869.2 1086.0,870.9 1087.0,871.3 1088.0,871.2 1089.0,871.7 1090.0,872.5 1091.0,873.8 1092.0,867.8 1093.0,868.0 1094.0,871.7 1095.0,869.1 1096.0,870.1 1097.0,868.3 1098.0,867.7 1099.0,862.6 1100.0,866.4 1101.0,868.9 1102.0,870.0 1103.0,871.9 1104.0,870.0 1105.0,871.4 1106.0,872.4 1107.0,871.6 1108.0,874.1 1109.0,873.4 1110.0,873.1 1111.0,871.5 1112.0,873.7 1113.0,871.6 1114.0,873.1 1115.0,872.7 1116.0,871.9 1117.0,874.1 1118.0,874.2 1119.0,874.4 1120.0,873.0 1121.0,874.9 1122.0,873.4 1123.0,874.8 1124.0,874.1 1125.0,874.1 1126.0,872.5 1127.0,875.5 1128.0,874.7 1129.0,874.8 1130.0,872.4 1131.0,869.0 1132.0,866.6 1133.0,866.2 1134.0,866.6 1135.0,866.0 1136.0,863.0 1137.0,865.6 1138.0,863.6 1139.0,864.9 1140.0,865.3 1141.0,862.1 1142.0,864.4 1143.0,864.3 1144.0,863.1 1145.0,861.3 1146.0,863.2 1147.0,862.5 1148.0,858.6 1149.0,860.5 1150.0,860.6 1151.0,860.6 1152.0,861.4 1153.0,859.7 1154.0,857.9 1155.0,861.2 1156.0,862.0 1157.0,858.2 1158.0,862.2 1159.0,864.4 1160.0,865.2 1161.0,866.2 1162.0,863.8 1163.0,862.6 1164.0,865.7 1165.0,866.3 1166.0,867.2 1167.0,868.3 1168.0,868.8 1169.0,866.9 1170.0,867.1 1171.0,869.4 1172.0,869.0 1173.0,871.0 1174.0,871.6 1175.0,871.0 1176.0,871.6 1177.0,871.7 1178.0,870.7 1179.0,873.5 1180.0,872.5 1181.0,872.1 1182.0,872.5 1183.0,868.7 1184.0,868.9 1185.0,863.3 1186.0,864.7 1187.0,863.7 1188.0,863.6 1189.0,862.2 1190.0,861.9 1191.0,861.0 1192.0,860.7 1193.0,862.1 1194.0,864.3 1195.0,865.2 1196.0,867.0 1197.0,868.0 1198.0,871.2 1199.0,871.0 1200.0,869.5 1201.0,868.1 1202.0,868.7 1203.0,866.8 1204.0,868.0 1205.0,868.5 1206.0,867.7 1207.0,866.6 1208.0,867.9 1209.0,869.7 1210.0,866.3 1211.0,869.7 1212.0,868.8 1213.0,868.0 1214.0,866.6 1215.0,866.6 1216.0,870.0 1217.0,869.0 1218.0,868.4 1219.0,868.5 1220.0,866.4 1221.0,869.8 1222.0,869.9 1223.0,869.2 1224.0,870.8 1225.0,870.6 1226.0,871.0 1227.0,869.9 1228.0,871.9 1229.0,870.4 1230.0,872.5 1231.0,872.9 1232.0,870.2 1233.0,872.2 1234.0,870.3 1235.0,871.5 1236.0,870.7 1237.0,871.6 1238.0,872.7 1239.0,871.2 1240.0,873.2 1241.0,872.7 1242.0,868.6 1243.0,872.3 1244.0,867.6 1245.0,868.4 1246.0,865.8 1247.0,863.7 1248.0,860.7 1249.0,861.1 1250.0,862.4 1251.0,862.4 1252.0,864.1 1253.0,867.4 1254.0,864.4 1255.0,867.8 1256.0,871.6 1257.0,872.3 1258.0,870.0 1259.0,869.5 1260.0,869.7 1261.0,869.2 1262.0,868.0 1263.0,866.0 1264.0,866.7 1265.0,865.5 1266.0,863.6 1267.0,861.7 1268.0,860.4 1269.0,862.6 1270.0,862.1 1271.0,864.3 1272.0,865.2 1273.0,865.6 1274.0,867.9 1275.0,867.8 1276.0,866.2 1277.0,868.7 1278.0,866.9 1279.0,866.7 1280.0,869.9 1281.0,868.9 1282.0,869.3 1283.0,869.8 1284.0,868.2 1285.0,866.0 1286.0,868.9 1287.0,869.2 1288.0,866.1 1289.0,870.4 1290.0,871.2 1291.0,870.5 1292.0,871.6 1293.0,872.3 1294.0,870.3 1295.0,866.8 1296.0,872.0 1297.0,868.4 1298.0,869.3 1299.0,870.4 1300.0,870.4 1301.0,867.2 1302.0,866.1 1303.0,865.2 1304.0,859.1 1305.0,860.0 1306.0,857.0 1307.0,855.5 1308.0,855.5 1309.0,855.9 1310.0,858.6 1311.0,861.2 1312.0,864.8 1313.0,860.3 1314.0,868.8 1315.0,869.7 1316.0,870.1 1317.0,869.1 1318.0,867.8 1319.0,869.1 1320.0,867.8 1321.0,865.5 1322.0,863.3 1323.0,860.2 1324.0,864.4 1325.0,863.2 1326.0,862.0 1327.0,863.1 1328.0,856.2 1329.0,861.8 1330.0,861.6 1331.0,862.9 1332.0,864.4 1333.0,867.5 1334.0,867.2 1335.0,869.5 1336.0,864.1 1337.0,865.0 1338.0,869.3 1339.0,868.9 1340.0,868.3 1341.0,868.9 1342.0,870.8 1343.0,867.8 1344.0,871.2 1345.0,869.4 1346.0,871.0 1347.0,872.4 1348.0,871.0 1349.0,870.7 1350.0,871.2 1351.0,873.0 1352.0,871.5 1353.0,871.7 1354.0,869.1 1355.0,873.4 1356.0,873.8 1357.0,870.0 1358.0,869.9 1359.0,864.8 1360.0,864.1 1361.0,863.1 1362.0,857.5 1363.0,857.5 1364.0,859.1 1365.0,859.0 1366.0,861.1 1367.0,864.7 1368.0,865.3 1369.0,868.3 1370.0,869.8 1371.0,871.0 1372.0,870.0 1373.0,871.4 1374.0,872.6 1375.0,872.9 1376.0,873.6 1377.0,874.1 1378.0,875.1 1379.0,873.0 1380.0,871.0 1381.0,863.3 1382.0,866.0 1383.0,860.6 1384.0,858.6 1385.0,856.0 1386.0,854.3 1387.0,857.8 1388.0,858.8 1389.0,861.4 1390.0,861.3 1391.0,863.2 1392.0,866.0 1393.0,865.4 1394.0,865.6 1395.0,866.2 1396.0,868.0 1397.0,866.4 1398.0,868.7 1399.0,867.7 1400.0,867.7 1401.0,866.5 1402.0,869.1 1403.0,868.4 1404.0,867.8 1405.0,869.2 1406.0,867.3 1407.0,868.6 1408.0,869.9 1409.0,866.7 1410.0,868.8 1411.0,869.8 1412.0,871.6 1413.0,866.4 1414.0,866.8 1415.0,867.8 1416.0,863.7 1417.0,861.6 1418.0,861.6 1419.0,860.3 1420.0,858.1 1421.0,859.6 1422.0,859.7 1423.0,861.2 1424.0,859.1 1425.0,863.7 1426.0,864.1 1427.0,865.9 1428.0,864.3 1429.0,862.3 1430.0,862.3 1431.0,862.3 1432.0,858.5 1433.0,859.6 1434.0,857.9 1435.0,855.0 1436.0,856.3 1437.0,854.5 1438.0,852.6 1439.0,851.8 1440.0,853.4 1441.0,850.6 1442.0,855.8 1443.0,857.9 1444.0,858.5 1445.0,858.5 1446.0,862.0 1447.0,861.1 1448.0,864.0 1449.0,862.3 1450.0,861.3 1451.0,863.8 1452.0,865.7 1453.0,867.1 1454.0,868.4 1455.0,867.6 1456.0,867.4 1457.0,870.3 1458.0,871.3 1459.0,869.9 1460.0,871.1 1461.0,870.5 1462.0,872.0 1463.0,873.2 1464.0,871.2 1465.0,873.8 1466.0,872.2 1467.0,871.7 1468.0,874.6 1469.0,873.9 1470.0,872.5 1471.0,873.6 1472.0,873.0 1473.0,874.6 1474.0,872.1 1475.0,862.0 1476.0,862.1 1477.0,859.6 1478.0,855.9 1479.0,853.3 1480.0,849.3 1481.0,849.2 1482.0,851.8 1483.0,853.8 1484.0,855.1 1485.0,856.6 1486.0,862.5 1487.0,863.6 1488.0,865.8 1489.0,867.0 1490.0,869.5 1491.0,865.9 1492.0,862.3 1493.0,860.7 1494.0,857.7 1495.0,853.6 1496.0,850.7 1497.0,848.9 1498.0,845.1 1499.0,843.1 1500.0,843.8 1501.0,845.1 1502.0,845.2 1503.0,844.4 1504.0,846.4 1505.0,845.7 1506.0,847.5 1507.0,845.3 1508.0,849.2 1509.0,850.2 1510.0,851.2 1511.0,850.2 1512.0,855.7 1513.0,856.2 1514.0,859.7 1515.0,860.9 1516.0,858.1 1517.0,865.9 1518.0,866.3 1519.0,866.9 1520.0,867.4 1521.0,864.7 1522.0,866.9 1523.0,869.1 1524.0,869.0 1525.0,868.4 1526.0,869.7 1527.0,867.1 1528.0,860.5 1529.0,864.7 1530.0,865.6 1531.0,863.0 1532.0,861.3 1533.0,857.9 1534.0,859.2 1535.0,857.5 1536.0,859.0 1537.0,852.3 1538.0,850.1 1539.0,855.0 1540.0,858.4 1541.0,857.7 1542.0,861.9 1543.0,860.7 1544.0,863.1 1545.0,863.2 1546.0,867.5 1547.0,868.2 1548.0,871.4 1549.0,869.8 1550.0,868.9 1551.0,863.7 1552.0,859.9 1553.0,857.9 1554.0,852.0 1555.0,851.1 1556.0,848.2 1557.0,846.3 1558.0,843.9 1559.0,844.0 1560.0,844.6 1561.0,846.5 1562.0,847.5 1563.0,845.5 1564.0,847.3 1565.0,849.0 1566.0,850.4 1567.0,853.4 1568.0,854.3 1569.0,855.1 1570.0,857.0 1571.0,859.2 1572.0,862.8 1573.0,864.8 1574.0,865.8 1575.0,868.0 1576.0,868.2 1577.0,870.1 1578.0,868.9 1579.0,866.0 1580.0,866.4 1581.0,864.9 1582.0,863.3 1583.0,863.9 1584.0,863.7 1585.0,860.7 1586.0,859.4 1587.0,860.3 1588.0,858.2 1589.0,856.7 1590.0,856.0 1591.0,855.0 1592.0,856.2 1593.0,852.8 1594.0,852.8 1595.0,851.3 1596.0,855.9 1597.0,857.4 1598.0,861.6 1599.0,864.8 1600.0,868.4 1601.0,863.0 1602.0,869.0 1603.0,866.1 1604.0,865.9 1605.0,864.4 1606.0,862.9 1607.0,863.7 1608.0,859.5 1609.0,858.5 1610.0,859.2 1611.0,857.6 1612.0,856.0 1613.0,856.0 1614.0,854.6 1615.0,849.3 1616.0,850.3 1617.0,849.2 1618.0,849.9 1619.0,854.1 1620.0,855.7 1621.0,852.7 1622.0,858.1 1623.0,857.7 1624.0,862.2 1625.0,865.2 1626.0,861.4 1627.0,868.1 1628.0,870.2 1629.0,864.1 1630.0,857.0 1631.0,857.4 1632.0,852.2 1633.0,848.7 1634.0,845.1 1635.0,844.0 1636.0,844.6 1637.0,846.6 1638.0,848.5 1639.0,849.9 1640.0,851.9 1641.0,854.9 1642.0,854.2 1643.0,854.2 1644.0,856.0 1645.0,857.0 1646.0,855.7 1647.0,858.1 1648.0,857.7 1649.0,858.9 1650.0,857.0 1651.0,856.9 1652.0,856.4 1653.0,859.4 1654.0,858.5 1655.0,859.0 1656.0,861.2 1657.0,861.8 1658.0,866.8 1659.0,866.1 1660.0,866.2 1661.0,868.5 1662.0,871.5 1663.0,869.8 1664.0,867.6 1665.0,869.0 1666.0,865.7 1667.0,864.1 1668.0,864.2 1669.0,862.1 1670.0,862.6 1671.0,860.3 1672.0,858.3 1673.0,856.5 1674.0,857.2 1675.0,855.3 1676.0,853.5 1677.0,854.4 1678.0,854.0 1679.0,858.2 1680.0,857.4 1681.0,860.0 1682.0,861.7 1683.0,863.2 1684.0,864.7 1685.0,867.3 1686.0,866.7 1687.0,867.0 1688.0,868.2 1688.0,877.0Z" fill="#3da2de"/></g>
 <path d="M1036 847L1030.5 852.5L1036 858Z" fill="#fff"/>
 <path d="M1693 847L1698.5 852.5L1693 858Z" fill="#fff"/>
 <rect x="1157" y="892.5" width="411.5" height="56" rx="4" fill="#9730b4"/>
 <g clip-path="url(#cb)"><path d="M1157.0,948.5 1157.0,943.6 1158.0,943.0 1159.0,941.3 1160.0,940.4 1161.0,938.8 1162.0,935.5 1163.0,934.0 1164.0,925.2 1165.0,929.9 1166.0,926.7 1167.0,930.7 1168.0,933.8 1169.0,935.4 1170.0,938.0 1171.0,941.8 1172.0,941.7 1173.0,934.1 1174.0,939.9 1175.0,931.8 1176.0,938.6 1177.0,937.7 1178.0,939.3 1179.0,936.6 1180.0,935.8 1181.0,936.3 1182.0,936.3 1183.0,934.1 1184.0,935.5 1185.0,936.1 1186.0,938.7 1187.0,929.7 1188.0,936.2 1189.0,936.3 1190.0,935.4 1191.0,935.9 1192.0,935.7 1193.0,932.0 1194.0,935.3 1195.0,933.4 1196.0,933.2 1197.0,933.1 1198.0,933.3 1199.0,932.8 1200.0,930.9 1201.0,932.4 1202.0,930.0 1203.0,933.9 1204.0,933.2 1205.0,935.4 1206.0,934.9 1207.0,935.6 1208.0,938.0 1209.0,938.9 1210.0,939.1 1211.0,938.9 1212.0,940.5 1213.0,937.2 1214.0,938.1 1215.0,937.7 1216.0,938.1 1217.0,936.4 1218.0,934.8 1219.0,933.6 1220.0,933.3 1221.0,931.0 1222.0,931.3 1223.0,933.2 1224.0,933.4 1225.0,937.6 1226.0,934.9 1227.0,934.8 1228.0,938.0 1229.0,934.9 1230.0,931.3 1231.0,939.0 1232.0,937.0 1233.0,935.3 1234.0,936.0 1235.0,937.3 1236.0,938.4 1237.0,935.8 1238.0,938.5 1239.0,936.4 1240.0,935.2 1241.0,936.2 1242.0,936.7 1243.0,935.5 1244.0,938.9 1245.0,938.2 1246.0,936.8 1247.0,940.1 1248.0,940.7 1249.0,939.3 1250.0,943.0 1251.0,941.5 1252.0,941.9 1253.0,941.4 1254.0,939.0 1255.0,937.8 1256.0,934.5 1257.0,925.3 1258.0,929.0 1259.0,929.6 1260.0,928.3 1261.0,934.1 1262.0,937.3 1263.0,937.8 1264.0,941.1 1265.0,937.8 1266.0,939.5 1267.0,937.8 1268.0,937.9 1269.0,940.9 1270.0,937.1 1271.0,939.7 1272.0,936.6 1273.0,937.6 1274.0,938.2 1275.0,932.7 1276.0,938.8 1277.0,936.9 1278.0,934.2 1279.0,937.1 1280.0,936.0 1281.0,937.6 1282.0,935.0 1283.0,937.2 1284.0,935.7 1285.0,938.4 1286.0,936.1 1287.0,935.6 1288.0,939.1 1289.0,939.2 1290.0,939.9 1291.0,937.8 1292.0,940.1 1293.0,940.3 1294.0,940.6 1295.0,942.1 1296.0,941.7 1297.0,937.5 1298.0,936.0 1299.0,934.5 1300.0,934.4 1301.0,932.6 1302.0,933.8 1303.0,931.1 1304.0,934.3 1305.0,932.9 1306.0,929.7 1307.0,936.4 1308.0,937.7 1309.0,934.1 1310.0,939.6 1311.0,940.4 1312.0,940.6 1313.0,938.6 1314.0,937.2 1315.0,940.5 1316.0,940.5 1317.0,937.7 1318.0,939.0 1319.0,938.9 1320.0,935.0 1321.0,928.9 1322.0,936.7 1323.0,935.7 1324.0,925.8 1325.0,934.0 1326.0,926.0 1327.0,932.0 1328.0,928.8 1329.0,927.9 1330.0,924.7 1331.0,931.6 1332.0,933.7 1333.0,934.2 1334.0,938.4 1335.0,939.6 1336.0,940.0 1337.0,934.3 1338.0,933.5 1339.0,935.3 1340.0,935.3 1341.0,929.2 1342.0,937.2 1343.0,938.0 1344.0,932.6 1345.0,938.9 1346.0,936.4 1347.0,936.9 1348.0,938.4 1349.0,938.1 1350.0,938.9 1351.0,940.4 1352.0,941.8 1353.0,936.3 1354.0,937.4 1355.0,936.8 1356.0,932.9 1357.0,934.7 1358.0,932.8 1359.0,931.5 1360.0,933.6 1361.0,926.8 1362.0,930.8 1363.0,931.1 1364.0,938.6 1365.0,937.6 1366.0,934.6 1367.0,938.6 1368.0,938.4 1369.0,941.8 1370.0,942.8 1371.0,935.0 1372.0,937.4 1373.0,932.5 1374.0,926.4 1375.0,925.3 1376.0,918.7 1377.0,923.5 1378.0,925.9 1379.0,928.3 1380.0,930.2 1381.0,934.7 1382.0,937.1 1383.0,935.0 1384.0,934.8 1385.0,937.7 1386.0,930.1 1387.0,939.2 1388.0,937.3 1389.0,939.0 1390.0,938.3 1391.0,939.8 1392.0,933.5 1393.0,935.4 1394.0,931.7 1395.0,927.3 1396.0,926.3 1397.0,925.9 1398.0,928.9 1399.0,930.9 1400.0,934.6 1401.0,935.6 1402.0,934.6 1403.0,933.8 1404.0,934.7 1405.0,934.0 1406.0,926.8 1407.0,933.1 1408.0,927.1 1409.0,930.6 1410.0,934.4 1411.0,932.9 1412.0,934.8 1413.0,936.8 1414.0,936.4 1415.0,940.4 1416.0,932.8 1417.0,934.0 1418.0,941.5 1419.0,942.0 1420.0,942.9 1421.0,943.0 1422.0,939.2 1423.0,942.7 1424.0,942.0 1425.0,939.1 1426.0,945.3 1427.0,939.9 1428.0,934.9 1429.0,929.5 1430.0,924.3 1431.0,921.1 1432.0,915.9 1433.0,909.6 1434.0,916.4 1435.0,916.8 1436.0,925.3 1437.0,928.6 1438.0,931.1 1439.0,934.0 1440.0,934.6 1441.0,925.8 1442.0,919.0 1443.0,912.3 1444.0,906.7 1445.0,899.7 1446.0,904.8 1447.0,905.5 1448.0,910.9 1449.0,909.0 1450.0,918.5 1451.0,921.7 1452.0,922.7 1453.0,927.0 1454.0,925.6 1455.0,929.2 1456.0,931.2 1457.0,934.0 1458.0,925.9 1459.0,934.0 1460.0,937.8 1461.0,934.1 1462.0,931.8 1463.0,931.2 1464.0,927.5 1465.0,925.3 1466.0,924.2 1467.0,918.7 1468.0,917.0 1469.0,921.3 1470.0,924.8 1471.0,926.2 1472.0,930.9 1473.0,927.3 1474.0,936.8 1475.0,934.2 1476.0,928.5 1477.0,922.7 1478.0,914.6 1479.0,908.2 1480.0,904.8 1481.0,909.1 1482.0,909.9 1483.0,914.0 1484.0,920.7 1485.0,922.3 1486.0,928.4 1487.0,928.9 1488.0,930.1 1489.0,933.0 1490.0,932.3 1491.0,938.0 1492.0,938.6 1493.0,936.8 1494.0,935.6 1495.0,928.1 1496.0,929.2 1497.0,925.8 1498.0,926.8 1499.0,923.0 1500.0,922.5 1501.0,917.3 1502.0,918.4 1503.0,915.2 1504.0,915.7 1505.0,925.7 1506.0,932.1 1507.0,938.7 1508.0,934.7 1509.0,933.9 1510.0,921.4 1511.0,926.2 1512.0,917.5 1513.0,921.3 1514.0,915.3 1515.0,907.6 1516.0,912.3 1517.0,916.3 1518.0,914.6 1519.0,923.5 1520.0,930.8 1521.0,926.5 1522.0,937.7 1523.0,937.1 1524.0,928.3 1525.0,921.7 1526.0,915.6 1527.0,907.5 1528.0,898.8 1529.0,906.7 1530.0,910.9 1531.0,911.3 1532.0,918.3 1533.0,919.9 1534.0,923.6 1535.0,927.4 1536.0,925.3 1537.0,929.9 1538.0,931.6 1539.0,930.3 1540.0,936.9 1541.0,938.8 1542.0,941.5 1543.0,938.7 1544.0,937.2 1545.0,933.9 1546.0,932.4 1547.0,927.4 1548.0,926.9 1549.0,922.2 1550.0,921.4 1551.0,923.5 1552.0,924.2 1553.0,925.2 1554.0,928.5 1555.0,926.5 1556.0,930.3 1557.0,934.2 1558.0,932.8 1559.0,934.4 1560.0,936.5 1561.0,938.5 1562.0,938.3 1563.0,938.0 1564.0,938.8 1565.0,934.2 1566.0,940.0 1567.0,937.8 1568.0,943.3 1568.5,948.5Z" fill="#a238c2"/><path d="M1157.0,948.5 1157.0,942.3 1158.0,944.2 1159.0,941.6 1160.0,942.6 1161.0,940.1 1162.0,936.7 1163.0,932.9 1164.0,935.0 1165.0,932.9 1166.0,934.5 1167.0,933.8 1168.0,931.3 1169.0,933.3 1170.0,939.0 1171.0,942.0 1172.0,942.0 1173.0,935.9 1174.0,940.9 1175.0,940.4 1176.0,942.8 1177.0,941.9 1178.0,938.6 1179.0,941.5 1180.0,941.5 1181.0,939.1 1182.0,938.9 1183.0,941.1 1184.0,933.2 1185.0,941.7 1186.0,940.0 1187.0,941.3 1188.0,940.9 1189.0,939.5 1190.0,939.0 1191.0,938.5 1192.0,937.6 1193.0,939.5 1194.0,937.4 1195.0,938.3 1196.0,939.2 1197.0,939.0 1198.0,937.1 1199.0,936.4 1200.0,935.1 1201.0,929.7 1202.0,937.8 1203.0,937.3 1204.0,937.4 1205.0,935.7 1206.0,941.5 1207.0,941.7 1208.0,940.5 1209.0,942.4 1210.0,940.9 1211.0,943.7 1212.0,943.4 1213.0,941.2 1214.0,942.4 1215.0,940.7 1216.0,937.1 1217.0,938.0 1218.0,939.9 1219.0,939.2 1220.0,938.1 1221.0,939.3 1222.0,934.2 1223.0,937.2 1224.0,936.3 1225.0,938.4 1226.0,937.1 1227.0,939.1 1228.0,935.7 1229.0,941.5 1230.0,938.6 1231.0,938.7 1232.0,939.2 1233.0,939.4 1234.0,937.3 1235.0,939.5 1236.0,939.4 1237.0,940.3 1238.0,938.5 1239.0,940.0 1240.0,941.8 1241.0,940.6 1242.0,935.1 1243.0,941.9 1244.0,939.7 1245.0,938.9 1246.0,942.6 1247.0,941.6 1248.0,940.3 1249.0,942.4 1250.0,942.7 1251.0,939.9 1252.0,941.9 1253.0,943.1 1254.0,940.7 1255.0,939.4 1256.0,939.3 1257.0,936.1 1258.0,936.7 1259.0,937.5 1260.0,937.6 1261.0,938.9 1262.0,940.2 1263.0,939.5 1264.0,941.2 1265.0,943.3 1266.0,942.0 1267.0,941.0 1268.0,940.2 1269.0,939.8 1270.0,943.1 1271.0,935.3 1272.0,941.8 1273.0,940.2 1274.0,941.4 1275.0,942.4 1276.0,939.5 1277.0,939.0 1278.0,939.1 1279.0,939.4 1280.0,942.0 1281.0,939.9 1282.0,936.9 1283.0,933.3 1284.0,938.0 1285.0,941.6 1286.0,937.8 1287.0,938.2 1288.0,941.2 1289.0,938.8 1290.0,939.5 1291.0,941.3 1292.0,936.5 1293.0,943.5 1294.0,938.3 1295.0,943.1 1296.0,943.3 1297.0,942.9 1298.0,938.5 1299.0,937.9 1300.0,939.8 1301.0,931.8 1302.0,937.6 1303.0,936.8 1304.0,937.1 1305.0,937.9 1306.0,939.9 1307.0,935.4 1308.0,940.1 1309.0,937.1 1310.0,943.4 1311.0,935.8 1312.0,942.6 1313.0,942.9 1314.0,937.0 1315.0,938.4 1316.0,941.5 1317.0,939.8 1318.0,935.7 1319.0,941.8 1320.0,940.6 1321.0,940.4 1322.0,938.8 1323.0,939.9 1324.0,939.1 1325.0,935.8 1326.0,936.5 1327.0,936.5 1328.0,933.5 1329.0,934.5 1330.0,934.4 1331.0,937.0 1332.0,938.9 1333.0,936.2 1334.0,939.1 1335.0,942.8 1336.0,937.8 1337.0,937.5 1338.0,933.9 1339.0,940.2 1340.0,938.1 1341.0,938.7 1342.0,940.4 1343.0,940.3 1344.0,939.8 1345.0,940.4 1346.0,940.9 1347.0,939.3 1348.0,941.8 1349.0,942.8 1350.0,944.2 1351.0,938.2 1352.0,943.1 1353.0,942.6 1354.0,942.1 1355.0,938.1 1356.0,940.9 1357.0,938.6 1358.0,938.4 1359.0,937.9 1360.0,937.3 1361.0,935.4 1362.0,939.0 1363.0,938.0 1364.0,940.4 1365.0,936.1 1366.0,940.3 1367.0,941.2 1368.0,941.5 1369.0,944.3 1370.0,944.9 1371.0,943.5 1372.0,938.3 1373.0,937.6 1374.0,932.3 1375.0,927.0 1376.0,928.4 1377.0,930.1 1378.0,931.6 1379.0,934.6 1380.0,935.5 1381.0,938.7 1382.0,939.2 1383.0,936.6 1384.0,939.4 1385.0,940.2 1386.0,938.4 1387.0,939.0 1388.0,939.8 1389.0,938.5 1390.0,939.6 1391.0,942.6 1392.0,938.4 1393.0,936.5 1394.0,937.2 1395.0,935.1 1396.0,930.8 1397.0,930.8 1398.0,933.7 1399.0,935.3 1400.0,935.0 1401.0,938.1 1402.0,938.0 1403.0,936.3 1404.0,939.3 1405.0,932.1 1406.0,935.3 1407.0,937.6 1408.0,934.2 1409.0,936.7 1410.0,936.7 1411.0,936.4 1412.0,937.7 1413.0,941.6 1414.0,939.4 1415.0,939.7 1416.0,941.3 1417.0,941.4 1418.0,942.0 1419.0,943.2 1420.0,943.2 1421.0,942.2 1422.0,942.9 1423.0,942.8 1424.0,944.1 1425.0,942.9 1426.0,946.6 1427.0,943.2 1428.0,939.6 1429.0,936.3 1430.0,931.3 1431.0,928.5 1432.0,925.3 1433.0,921.5 1434.0,922.5 1435.0,929.3 1436.0,933.1 1437.0,933.2 1438.0,936.5 1439.0,939.7 1440.0,938.6 1441.0,932.0 1442.0,928.2 1443.0,923.7 1444.0,918.9 1445.0,915.3 1446.0,916.7 1447.0,920.3 1448.0,920.6 1449.0,920.3 1450.0,924.0 1451.0,928.3 1452.0,928.4 1453.0,930.0 1454.0,932.0 1455.0,934.9 1456.0,934.9 1457.0,935.0 1458.0,938.6 1459.0,941.0 1460.0,940.8 1461.0,939.8 1462.0,935.7 1463.0,937.0 1464.0,933.9 1465.0,930.7 1466.0,927.7 1467.0,926.5 1468.0,920.8 1469.0,927.8 1470.0,931.6 1471.0,935.0 1472.0,934.6 1473.0,936.6 1474.0,939.7 1475.0,937.2 1476.0,934.8 1477.0,929.8 1478.0,923.1 1479.0,918.5 1480.0,917.3 1481.0,917.2 1482.0,923.5 1483.0,925.7 1484.0,926.7 1485.0,932.9 1486.0,930.2 1487.0,934.2 1488.0,934.4 1489.0,935.7 1490.0,937.7 1491.0,938.6 1492.0,935.9 1493.0,941.4 1494.0,938.2 1495.0,936.8 1496.0,934.5 1497.0,931.9 1498.0,932.7 1499.0,928.3 1500.0,927.1 1501.0,926.1 1502.0,924.7 1503.0,923.2 1504.0,925.7 1505.0,931.6 1506.0,935.8 1507.0,941.2 1508.0,940.5 1509.0,936.3 1510.0,935.7 1511.0,933.4 1512.0,931.8 1513.0,928.4 1514.0,925.5 1515.0,921.4 1516.0,920.1 1517.0,924.1 1518.0,926.8 1519.0,932.6 1520.0,933.3 1521.0,939.7 1522.0,941.4 1523.0,940.3 1524.0,937.0 1525.0,928.9 1526.0,924.4 1527.0,920.3 1528.0,915.4 1529.0,915.3 1530.0,915.4 1531.0,924.5 1532.0,925.7 1533.0,927.8 1534.0,929.9 1535.0,932.0 1536.0,929.5 1537.0,937.0 1538.0,935.3 1539.0,939.0 1540.0,936.7 1541.0,941.4 1542.0,940.2 1543.0,942.1 1544.0,940.4 1545.0,935.9 1546.0,936.7 1547.0,930.7 1548.0,932.3 1549.0,930.0 1550.0,930.8 1551.0,930.8 1552.0,930.8 1553.0,929.7 1554.0,934.5 1555.0,936.3 1556.0,934.7 1557.0,937.2 1558.0,940.4 1559.0,938.1 1560.0,939.8 1561.0,938.8 1562.0,941.7 1563.0,942.7 1564.0,943.5 1565.0,938.8 1566.0,944.4 1567.0,944.1 1568.0,945.6 1568.5,948.5Z" fill="#c75ae8"/></g>
 <rect x="1600" y="892.5" width="178" height="56" rx="4" fill="#2e45d4"/>
 <g clip-path="url(#cs)"><path d="M1600.0,948.5 1600.0,938.0 1600.8,936.2 1601.6,934.2 1602.4,930.9 1603.2,930.2 1604.0,928.6 1604.8,925.0 1605.6,926.8 1606.4,935.1 1607.2,937.6 1608.0,931.9 1608.8,940.1 1609.6,938.9 1610.4,939.0 1611.2,937.9 1612.0,936.6 1612.8,937.0 1613.6,935.6 1614.4,936.9 1615.2,938.2 1616.0,940.3 1616.8,936.4 1617.6,937.7 1618.4,934.5 1619.2,932.5 1620.0,935.0 1620.8,929.7 1621.6,938.3 1622.4,939.1 1623.2,941.2 1624.0,940.9 1624.8,939.4 1625.6,939.8 1626.4,939.3 1627.2,937.9 1628.0,935.7 1628.8,929.5 1629.6,937.4 1630.4,938.6 1631.2,939.9 1632.0,937.5 1632.8,939.6 1633.6,940.1 1634.4,940.7 1635.2,938.6 1636.0,936.3 1636.8,934.5 1637.6,932.0 1638.4,925.5 1639.2,934.4 1640.0,937.7 1640.8,939.4 1641.6,939.0 1642.4,932.8 1643.2,928.8 1644.0,927.4 1644.8,930.1 1645.6,926.6 1646.4,934.9 1647.2,937.8 1648.0,938.0 1648.8,940.8 1649.6,937.5 1650.4,938.6 1651.2,935.7 1652.0,935.7 1652.8,933.3 1653.6,933.8 1654.4,933.5 1655.2,936.4 1656.0,935.9 1656.8,939.0 1657.6,939.1 1658.4,938.5 1659.2,937.9 1660.0,936.2 1660.8,935.1 1661.6,933.9 1662.4,933.6 1663.2,930.6 1664.0,932.5 1664.8,933.1 1665.6,936.1 1666.4,936.3 1667.2,937.8 1668.0,937.5 1668.8,938.3 1669.6,931.8 1670.4,936.9 1671.2,929.0 1672.0,932.8 1672.8,931.8 1673.6,929.2 1674.4,929.7 1675.2,932.2 1676.0,933.5 1676.8,932.1 1677.6,936.4 1678.4,938.3 1679.2,939.3 1680.0,935.0 1680.8,932.9 1681.6,937.0 1682.4,935.6 1683.2,934.7 1684.0,930.1 1684.8,933.9 1685.6,935.8 1686.4,936.8 1687.2,936.6 1688.0,939.3 1688.8,939.5 1689.6,940.4 1690.4,934.5 1691.2,936.8 1692.0,934.6 1692.8,934.0 1693.6,928.9 1694.4,933.4 1695.2,933.1 1696.0,936.0 1696.8,935.4 1697.6,937.8 1698.4,937.4 1699.2,938.0 1700.0,936.5 1700.8,936.1 1701.6,934.3 1702.4,933.0 1703.2,931.3 1704.0,932.0 1704.8,930.4 1705.6,931.3 1706.4,931.4 1707.2,937.7 1708.0,937.8 1708.8,940.2 1709.6,938.7 1710.4,937.1 1711.2,931.0 1712.0,933.3 1712.8,930.6 1713.6,929.0 1714.4,923.2 1715.2,924.6 1716.0,917.1 1716.8,915.9 1717.6,912.8 1718.4,917.3 1719.2,922.9 1720.0,928.7 1720.8,933.0 1721.6,916.4 1722.4,912.7 1723.2,902.0 1724.0,899.4 1724.8,909.3 1725.6,920.1 1726.4,929.1 1727.2,929.3 1728.0,921.5 1728.8,922.8 1729.6,920.1 1730.4,922.2 1731.2,925.5 1732.0,929.3 1732.8,934.1 1733.6,937.2 1734.4,930.8 1735.2,927.7 1736.0,918.1 1736.8,917.2 1737.6,912.4 1738.4,907.2 1739.2,902.5 1740.0,901.0 1740.8,911.2 1741.6,917.9 1742.4,925.1 1743.2,931.2 1744.0,932.0 1744.8,925.7 1745.6,926.9 1746.4,923.0 1747.2,919.5 1748.0,917.0 1748.8,913.1 1749.6,913.2 1750.4,918.6 1751.2,925.8 1752.0,932.1 1752.8,930.5 1753.6,923.5 1754.4,914.2 1755.2,906.8 1756.0,915.5 1756.8,924.3 1757.6,921.1 1758.4,912.4 1759.2,899.0 1760.0,904.1 1760.8,913.4 1761.6,921.7 1762.4,928.5 1763.2,923.3 1764.0,920.9 1764.8,916.6 1765.6,918.1 1766.4,925.3 1767.2,933.1 1768.0,928.9 1768.8,924.0 1769.6,924.8 1770.4,932.0 1771.2,938.1 1772.0,936.0 1772.8,935.6 1773.6,933.7 1774.4,933.3 1775.2,933.1 1776.0,930.5 1776.8,931.4 1777.6,931.8 1778.0,948.5Z" fill="#3260d6"/><path d="M1600.0,948.5 1600.0,938.1 1600.8,938.9 1601.6,936.4 1602.4,934.3 1603.2,931.4 1604.0,931.6 1604.8,934.6 1605.6,936.3 1606.4,936.3 1607.2,938.5 1608.0,940.0 1608.8,942.6 1609.6,942.9 1610.4,940.7 1611.2,941.1 1612.0,938.4 1612.8,939.7 1613.6,937.3 1614.4,939.5 1615.2,940.8 1616.0,940.9 1616.8,940.8 1617.6,939.5 1618.4,938.2 1619.2,938.0 1620.0,937.4 1620.8,939.2 1621.6,939.5 1622.4,941.9 1623.2,940.8 1624.0,943.3 1624.8,942.9 1625.6,940.9 1626.4,940.3 1627.2,939.5 1628.0,939.5 1628.8,938.3 1629.6,940.2 1630.4,940.0 1631.2,940.1 1632.0,941.6 1632.8,940.3 1633.6,943.1 1634.4,942.4 1635.2,939.4 1636.0,939.9 1636.8,936.3 1637.6,935.6 1638.4,930.3 1639.2,935.7 1640.0,938.6 1640.8,942.6 1641.6,939.2 1642.4,936.8 1643.2,933.7 1644.0,932.6 1644.8,934.1 1645.6,935.3 1646.4,938.2 1647.2,940.3 1648.0,941.1 1648.8,940.5 1649.6,939.6 1650.4,939.1 1651.2,939.2 1652.0,937.2 1652.8,937.5 1653.6,935.4 1654.4,938.3 1655.2,937.6 1656.0,938.8 1656.8,940.8 1657.6,940.2 1658.4,941.3 1659.2,940.2 1660.0,938.3 1660.8,938.5 1661.6,937.1 1662.4,935.4 1663.2,933.7 1664.0,935.2 1664.8,934.1 1665.6,938.6 1666.4,940.1 1667.2,940.1 1668.0,940.8 1668.8,941.8 1669.6,937.0 1670.4,937.8 1671.2,937.5 1672.0,936.7 1672.8,935.9 1673.6,933.6 1674.4,933.6 1675.2,934.5 1676.0,935.4 1676.8,936.2 1677.6,939.0 1678.4,941.0 1679.2,939.9 1680.0,940.1 1680.8,937.3 1681.6,937.5 1682.4,937.9 1683.2,933.0 1684.0,936.2 1684.8,937.0 1685.6,938.9 1686.4,939.4 1687.2,935.5 1688.0,939.6 1688.8,942.5 1689.6,940.8 1690.4,941.1 1691.2,936.9 1692.0,937.8 1692.8,937.7 1693.6,936.9 1694.4,936.9 1695.2,937.0 1696.0,935.3 1696.8,939.5 1697.6,938.6 1698.4,939.8 1699.2,941.7 1700.0,939.1 1700.8,938.4 1701.6,937.2 1702.4,935.9 1703.2,936.5 1704.0,932.3 1704.8,935.3 1705.6,936.3 1706.4,938.6 1707.2,938.9 1708.0,940.4 1708.8,939.9 1709.6,939.3 1710.4,938.6 1711.2,936.2 1712.0,936.1 1712.8,935.5 1713.6,933.5 1714.4,930.4 1715.2,929.1 1716.0,926.0 1716.8,924.5 1717.6,919.7 1718.4,923.4 1719.2,928.7 1720.0,934.0 1720.8,934.9 1721.6,926.7 1722.4,918.3 1723.2,910.5 1724.0,910.5 1724.8,916.8 1725.6,925.3 1726.4,931.7 1727.2,932.0 1728.0,930.8 1728.8,927.3 1729.6,922.3 1730.4,928.4 1731.2,926.9 1732.0,934.7 1732.8,934.3 1733.6,937.5 1734.4,934.3 1735.2,931.3 1736.0,925.6 1736.8,924.5 1737.6,919.9 1738.4,915.0 1739.2,912.4 1740.0,914.6 1740.8,918.9 1741.6,925.4 1742.4,927.1 1743.2,936.4 1744.0,934.5 1744.8,929.6 1745.6,930.8 1746.4,927.6 1747.2,925.4 1748.0,922.4 1748.8,921.0 1749.6,921.3 1750.4,925.6 1751.2,929.8 1752.0,934.2 1752.8,933.3 1753.6,928.8 1754.4,920.7 1755.2,915.9 1756.0,922.4 1756.8,929.8 1757.6,929.3 1758.4,919.6 1759.2,909.1 1760.0,914.5 1760.8,920.2 1761.6,927.6 1762.4,932.9 1763.2,928.3 1764.0,926.3 1764.8,921.7 1765.6,924.8 1766.4,929.7 1767.2,936.7 1768.0,932.6 1768.8,929.1 1769.6,929.3 1770.4,935.3 1771.2,939.0 1772.0,938.6 1772.8,937.3 1773.6,935.6 1774.4,936.0 1775.2,935.2 1776.0,935.2 1776.8,934.4 1777.6,933.6 1778.0,948.5Z" fill="#3da2de"/></g>
 <g fill="none" stroke="#fff" stroke-width="1.7" stroke-linecap="round">
  <path d="M1058.5 859V843.5Q1059.5 847 1062.5 850"/>
  <ellipse cx="1055.5" cy="860.5" rx="3.3" ry="2.6"/>
  <path d="M1635 928V912.5Q1636 916 1639 919"/>
  <ellipse cx="1632" cy="929.5" rx="3.3" ry="2.6"/>
  <rect x="1184.6" y="909.8" width="9" height="15.6" rx="3"/>
  <path d="M1182 919V920.5Q1182 926.2 1189 926.2Q1196.3 926.2 1196.3 920.5V919M1189.2 926.2V931.4M1186 931.4H1192.4"/>
 </g>
</svg>
<div class="t" style="left:1075px;top:845px;font-size:17px;color:#fff">roast.mp3</div>
<div class="t" style="left:1207px;top:913.8px;font-size:17px;color:#fff">boiling.mp3</div>
<div class="t" style="left:1649px;top:913.8px;font-size:17px;letter-spacing:-0.5px;color:#fff">Swish.mp3</div>
<!-- playhead -->
<div class="a" style="left:1024px;top:680px;width:2px;height:274px;background:#f0b843"></div>
<div class="a" style="left:970px;top:647px;width:112px;height:33px;background:#f0b843;border-radius:3px"></div>
<div class="t" style="left:981px;top:651px;font-size:25px;color:#000">00:02.1</div>

<!-- status -->
<div class="a" style="left:0;top:956px;width:1920px;height:67px;background:#333"></div>
<div class="t" style="left:17px;top:979px;font-size:21px;color:#bbb">Video legth with audio: 00:16.0</div>


<div class="a" style="left:1638.5px;top:966.5px;width:113px;height:46px;border:3px solid #efbe50"></div>
<div class="a" style="left:1774px;top:966.5px;width:112.5px;height:46px;border:3px solid #efbe50"></div>
<div class="t" style="left:1638.5px;width:113px;text-align:center;top:979px;font-size:21px;letter-spacing:0.1px;-webkit-text-stroke:0.6px #efbe50;color:#efbe50">Save</div>
<div class="t" style="left:1774px;width:112.5px;text-align:center;top:979px;font-size:21px;letter-spacing:-0.3px;-webkit-text-stroke:0.6px #efbe50;color:#efbe50">Cancel</div>

<!-- taskbar -->
<div class="a" style="left:0;top:1023px;width:1920px;height:56px;background:#101010"></div>
<div class="a" style="left:68px;top:1023px;width:483px;height:56px;background:#3f3f3f"></div>


<svg style="left:0;top:1023px" width="1920" height="56" viewBox="0 1023 1920 56">
 <g fill="#fff">
  <path d="M22 1043.2L31.8 1041.8V1051.1H22Z"/>
  <path d="M33.2 1041.6L45.2 1039.9V1051.1H33.2Z"/>
  <path d="M22 1052.4H31.8V1061.7L22 1060.3Z"/>
  <path d="M33.2 1052.4H45.2V1063.6L33.2 1061.9Z"/>
 </g>
 <circle cx="95.5" cy="1051.3" r="14.6" fill="none" stroke="#fff" stroke-width="3.6"/>
 <g fill="none" stroke="#fff" stroke-width="1.7" stroke-linecap="round">
  <rect x="515.3" y="1040.5" width="7" height="13.5" rx="3.2"/>
  <path d="M512 1049.5V1051Q512 1057.5 518.8 1057.5Q525.6 1057.5 525.6 1051V1049.5M518.8 1057.5V1061.5M515.5 1061.5H522.2"/>
 </g>
 <g fill="none" stroke="#fff" stroke-width="1.8">
  <rect x="568.5" y="1045" width="5.5" height="12.5"/>
  <rect x="577" y="1041.5" width="14.5" height="19"/>
  <rect x="594.5" y="1045" width="5.5" height="12.5"/>
 </g>
 <!-- edge -->
 <path d="M637 1048C640 1039 646 1034.5 653 1034.5C662 1034.5 668.5 1041 668.5 1049V1054.2H647C648 1058.5 652 1061 657.5 1061C661 1061 664 1060 666 1059V1066C663.5 1067.5 660 1068 656 1068C646 1068 639.5 1061.5 639.5 1053C639.5 1046 643 1041.5 648 1040C644 1041 640 1044 637 1048Z" fill="#3a80cc"/>
 <path d="M647 1048H659.5C659.5 1044 656.5 1041.5 653 1041.5C650 1041.5 647.5 1044 647 1048Z" fill="#101010"/>
 <path d="M638 1049.5Q646 1040 657 1041.3" fill="none" stroke="#101010" stroke-width="1.6"/>
 <!-- explorer -->
 <path d="M703 1038.5Q703 1037.4 704 1037.4H714L717 1040H735.5Q736.2 1040 736.2 1041V1063.5Q736.2 1064.3 735.5 1064.3H703.8Q703 1064.3 703 1063.5Z" fill="#e8b94a"/>
 <path d="M703 1041.5H736.2V1063.5Q736.2 1064.3 735.5 1064.3H703.8Q703 1064.3 703 1063.5Z" fill="#f6d36c"/>
 <rect x="704.5" y="1038.6" width="7" height="1.6" fill="#fff3c0"/>
 <path d="M708.5 1065.5L709 1052H732L733 1065.5H727.5L725.2 1056.6H714.6L713 1065.5Z" fill="#2ec2f0"/>
 <!-- store -->
 <path d="M772 1043.6L802 1041V1067.6L772 1063.4Z" fill="#fff"/>
 <path d="M779 1043Q779.5 1034.5 787 1034.5Q794.5 1034.5 795.5 1041.5" fill="none" stroke="#fff" stroke-width="1.3"/>
 <path d="M782 1042.6Q783 1037 787.5 1036.6Q792 1037 793 1041.6" fill="none" stroke="#fff" stroke-width="0.9"/>
 <g fill="#111">
  <path d="M776.3 1047.8L782 1047.2V1052.6H776.3Z"/>
  <path d="M783.2 1047.1L789.8 1046.4V1052.6H783.2Z"/>
  <path d="M776.3 1053.8H782V1059L776.3 1058.6Z"/>
  <path d="M783.2 1053.8H789.8V1059.8L783.2 1059.2Z"/>
 </g>
 <!-- app icon -->
 <defs><linearGradient id="ag" x1="0" y1="0" x2="0" y2="1"><stop offset="0" stop-color="#f3c858"/><stop offset="1" stop-color="#eaa83a"/></linearGradient></defs>
 <rect x="835" y="1033" width="34" height="34" rx="6" fill="url(#ag)"/>
 <path d="M838 1058L849 1041.5H856.5L865.5 1058H858.5L851.5 1045.5L845 1058Z" fill="#fbfbfb"/>
 <path d="M849 1041.5L838 1058H845L852 1045.5Z" fill="#e4e6ee"/>
 <rect x="818" y="1073.5" width="67.5" height="3" fill="#2f84d8"/>
 <!-- tray -->
 <g fill="none" stroke="#fff" stroke-width="1.5">
  <path d="M1597 1056.3L1605.2 1047.5L1613.4 1056.3"/>
  <rect x="1639.5" y="1047" width="20" height="10" />
 </g>
 <rect x="1641.5" y="1049" width="16" height="6" fill="#fff"/>
 <rect x="1660" y="1050" width="2" height="4" fill="#fff"/>
 <g fill="none" stroke="#fff" stroke-width="1.5">
  <path d="M1689 1059.5A15 15 0 0 1 1704 1044.5"/>
  <path d="M1693 1059.5A11 11 0 0 1 1704 1048.5"/>
  <path d="M1697 1059.5A7 7 0 0 1 1704 1052.5"/>
 </g>
 <circle cx="1702.2" cy="1058" r="1.6" fill="#fff"/>
 <g fill="none" stroke="#fff" stroke-width="1.5" stroke-linejoin="round" stroke-linecap="round">
  <path d="M1729.5 1047.5H1733.5L1738.5 1042.5V1060.5L1733.5 1055.5H1729.5Z"/>
  <path d="M1742 1048Q1744.5 1051.5 1742 1055"/>
  <path d="M1745.5 1045Q1750 1051.5 1745.5 1058"/>
  <path d="M1749 1042Q1755.5 1051.5 1749 1061"/>
 </g>
 <rect x="1847" y="1023" width="67" height="56" fill="#1c1c1c"/>
 <rect x="1914" y="1023" width="1.5" height="56" fill="#3a3a3a"/>
 <path d="M1868 1040.5H1890.5V1054.5H1884L1878.5 1062V1054.5H1868Z" fill="#fff"/>
 <g fill="#1c1c1c"><rect x="1871" y="1044" width="16" height="1.5"/><rect x="1871" y="1047.5" width="16" height="1.5"/><rect x="1871" y="1051" width="11" height="1.5"/></g>
</svg>
<div class="t" style="left:124px;top:1041px;font-size:21px;color:#9a9a9a">Ask me anything</div>
<div class="t" style="left:1772px;top:1045px;font-size:18px;color:#fff">2:30 PM</div>
<div class="t" style="left:1887px;top:1054px;font-size:16px;color:#fff">5</div>

</body></html>
